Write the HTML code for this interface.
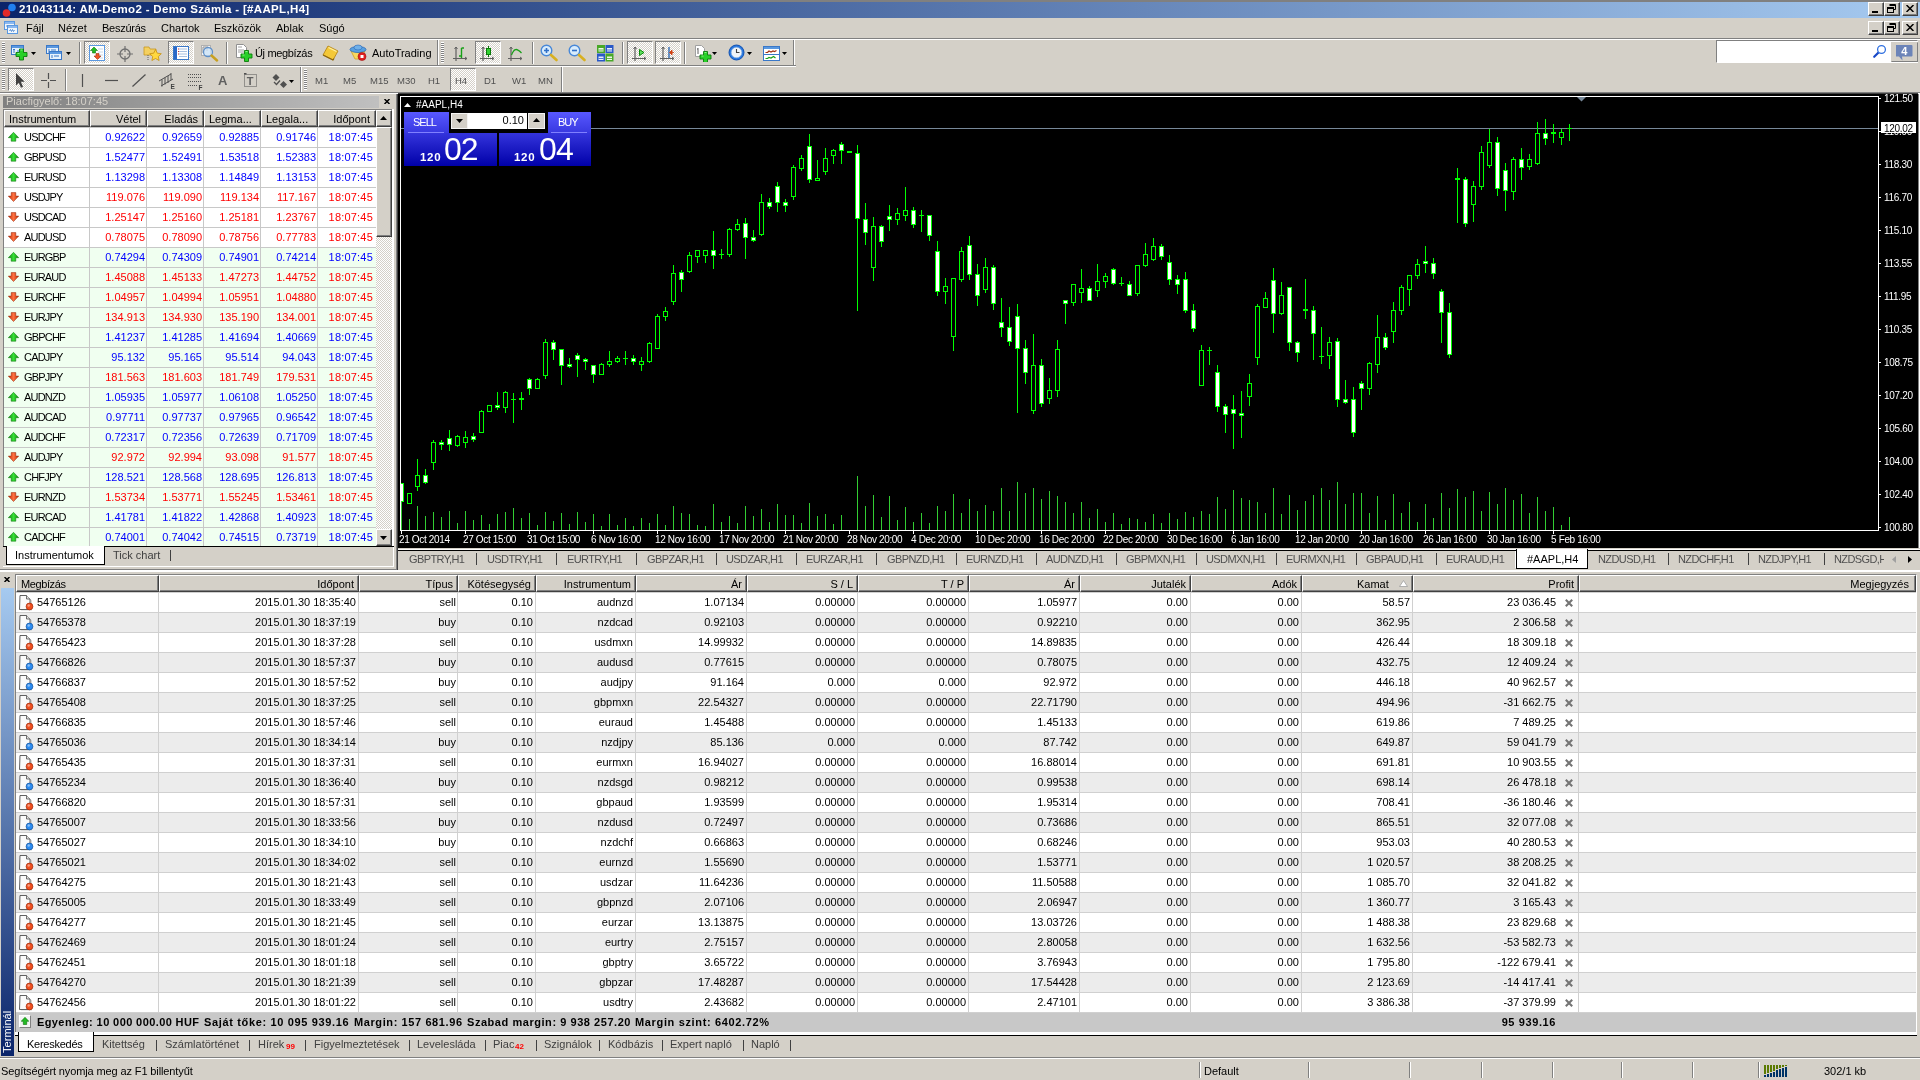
<!DOCTYPE html>
<html><head><meta charset="utf-8"><title>MT4</title><style>
html,body{margin:0;padding:0;}
body{width:1920px;height:1080px;overflow:hidden;background:#D4D0C8;position:relative;font-family:"Liberation Sans",sans-serif;font-size:11px;color:#000;}
div,span,svg{position:absolute;box-sizing:border-box;}
.t{white-space:nowrap;line-height:13px;height:13px;}
.b{font-weight:bold;}
.hd{background:#D4D0C8;border-top:1px solid #fff;border-left:1px solid #fff;border-right:1px solid #404040;border-bottom:1px solid #404040;}
.hd:after{content:"";position:absolute;right:0;bottom:0;left:0;top:0;border-right:1px solid #808080;border-bottom:1px solid #808080;}
.pr{border:1px solid;border-color:#808080 #fff #fff #808080;background-color:#fff;background-image:linear-gradient(45deg,#D4D0C8 25%,transparent 25%,transparent 75%,#D4D0C8 75%),linear-gradient(45deg,#D4D0C8 25%,transparent 25%,transparent 75%,#D4D0C8 75%);background-size:2px 2px;background-position:0 0,1px 1px;}
.sep{width:2px;border-left:1px solid #808080;border-right:1px solid #fff;}
.grip{width:3px;background:repeating-linear-gradient(#fff 0,#fff 1px,#808080 1px,#808080 2px);}
.btn{background:#D4D0C8;border:1px solid;border-color:#fff #404040 #404040 #fff;}
.btn:after{content:"";position:absolute;left:0;top:0;right:0;bottom:0;border-right:1px solid #808080;border-bottom:1px solid #808080;}
.g{color:#505050;}
.ax{font-size:10px;color:#fff;line-height:11px;height:11px;white-space:nowrap;}
</style></head><body>
<div id="root" style="left:0;top:0;width:1920px;height:1080px;will-change:transform">
<div style="left:0px;top:0px;width:1920px;height:2px;background:#808080"></div>
<div style="left:0px;top:2px;width:1920px;height:16px;background:linear-gradient(90deg,#0A246A 0%,#A6CAF0 100%)"></div>
<svg style="left:2px;top:3px;width:15px;height:15px" viewBox="0 0 15 15"><circle cx="4.500" cy="10" r="3.800" fill="#E02828"/><circle cx="10" cy="4.500" r="3.800" fill="#2080F0"/></svg>
<span class="t" style="left:19px;top:3px;color:#fff;font-weight:bold;font-size:11.5px;letter-spacing:0.33px">21043114: AM-Demo2 - Demo Számla - [#AAPL,H4]</span>
<div class="btn" style="left:1868px;top:2px;width:16px;height:14px;"></div>
<div style="left:1872px;top:11px;width:6px;height:2px;background:#000"></div>
<div class="btn" style="left:1884px;top:2px;width:16px;height:14px;"></div>
<svg style="left:1887px;top:4px;width:10px;height:10px" viewBox="0 0 10 10"><path d="M2.500 0.500h6v5h-1.500M2.500 1.500h6" stroke="#000" fill="none"/><rect x="0.500" y="3.500" width="6" height="5" fill="none" stroke="#000"/><path d="M0.500 4.500h6" stroke="#000"/></svg>
<div class="btn" style="left:1902px;top:2px;width:16px;height:14px;"></div>
<svg style="left:1906px;top:5px;width:8px;height:7px" viewBox="0 0 8 7"><path d="M0.500 0l7 7M7.500 0l-7 7" stroke="#000" stroke-width="1.500"/></svg>
<div class="btn" style="left:1868px;top:21px;width:16px;height:14px;"></div>
<div style="left:1872px;top:30px;width:6px;height:2px;background:#000"></div>
<div class="btn" style="left:1884px;top:21px;width:16px;height:14px;"></div>
<svg style="left:1887px;top:23px;width:10px;height:10px" viewBox="0 0 10 10"><path d="M2.500 0.500h6v5h-1.500M2.500 1.500h6" stroke="#000" fill="none"/><rect x="0.500" y="3.500" width="6" height="5" fill="none" stroke="#000"/><path d="M0.500 4.500h6" stroke="#000"/></svg>
<div class="btn" style="left:1902px;top:21px;width:16px;height:14px;"></div>
<svg style="left:1906px;top:24px;width:8px;height:7px" viewBox="0 0 8 7"><path d="M0.500 0l7 7M7.500 0l-7 7" stroke="#000" stroke-width="1.500"/></svg>
<svg style="left:4px;top:21px;width:15px;height:14px" viewBox="0 0 15 14"><rect x="0.500" y="0.500" width="10" height="8" fill="#F0F6FC" stroke="#5A98E0"/><rect x="1" y="1" width="9" height="2" fill="#8AB8F0"/><rect x="3.500" y="4.500" width="10" height="8" fill="#F0F6FC" stroke="#5A98E0"/><rect x="4" y="5" width="9" height="2" fill="#8AB8F0"/><path d="M5.500 10l1-1.500 1 2 1-2 1 2 1-1.500" stroke="#3A78C8" stroke-width=".8" fill="none"/><path d="M2 5h1.500" stroke="#3A78C8" stroke-width=".8"/></svg>
<span class="t" style="left:26px;top:22px;">Fájl</span>
<span class="t" style="left:58px;top:22px;">Nézet</span>
<span class="t" style="left:102px;top:22px;letter-spacing:-0.25px">Beszúrás</span>
<span class="t" style="left:161px;top:22px;">Chartok</span>
<span class="t" style="left:214px;top:22px;">Eszközök</span>
<span class="t" style="left:276px;top:22px;">Ablak</span>
<span class="t" style="left:319px;top:22px;">Súgó</span>
<div style="left:0px;top:38px;width:1920px;height:1px;background:#808080"></div>
<div style="left:0px;top:39px;width:1920px;height:1px;background:#fff"></div>
<div style="left:0px;top:65px;width:796px;height:1px;background:#808080"></div>
<div style="left:0px;top:66px;width:796px;height:1px;background:#fff"></div>
<div class="grip" style="left:2px;top:42px;width:3px;height:21px;"></div>
<svg style="left:11px;top:44px;width:18px;height:18px" viewBox="0 0 18 18"><rect x="0.5" y="1.5" width="12" height="9" fill="#E8F2FC" stroke="#3A78C8"/><rect x="1" y="2" width="11" height="2" fill="#5A98E0"/><path d="M3 5v4M2 6l1-1 1 1M6 7h4" stroke="#3A78C8" fill="none"/><path d="M8.5 5.0h4v3.500h3.500v4h-3.500v3.500h-4v-3.500h-3.500v-4h3.500z" fill="#28D028" stroke="#0C7C0C" stroke-width=".9"/><path d="M9.5 6.0h2M6.5 9.5h2" stroke="#A0FFA0" stroke-width="1" opacity=".8"/></svg>
<svg style="left:31px;top:52px;width:5px;height:3px" viewBox="0 0 5 3"><path d="M0 0h5l-2.500 3z" fill="#000"/></svg>
<svg style="left:46px;top:44px;width:18px;height:18px" viewBox="0 0 18 18"><rect x="0.5" y="1.5" width="12" height="8" fill="#E8F2FC" stroke="#3A78C8"/><rect x="1" y="2" width="11" height="2" fill="#5A98E0"/><path d="M3 5v4M5 6h5" stroke="#3A78C8"/><rect x="3.5" y="7.5" width="12" height="8" fill="#E8F2FC" stroke="#3A78C8"/><rect x="4" y="8" width="11" height="2" fill="#5A98E0"/><path d="M6 11v3M8 12h5" stroke="#3A78C8"/></svg>
<svg style="left:66px;top:52px;width:5px;height:3px" viewBox="0 0 5 3"><path d="M0 0h5l-2.500 3z" fill="#000"/></svg>
<div class="sep" style="left:79px;top:42px;width:2px;height:22px;"></div>
<div class="pr" style="left:84px;top:41px;width:26px;height:23px;"></div>
<svg style="left:89px;top:45px;width:16px;height:16px" viewBox="0 0 16 16"><rect x="0.5" y="0.5" width="15" height="15" fill="#fff" stroke="#5A98E0"/><path d="M9 4h5M9 7h5M9 10h5M9 13h5" stroke="#C8D8E8"/><path d="M5 2l3.5 3.5h-2v2.5h-3v-2.5h-2z" fill="#22BB22" stroke="#0A7A0A" stroke-width=".6"/><path d="M8.5 14.500l3.500-3.500h-2v-2.500h-3v2.500h-2z" fill="#EE5522" stroke="#A03010" stroke-width=".6"/></svg>
<svg style="left:117px;top:46px;width:16px;height:16px" viewBox="0 0 16 16"><circle cx="8" cy="8" r="5" fill="none" stroke="#707070" stroke-width="1.3"/><path d="M8 0v6M8 10v6M0 8h6M10 8h6" stroke="#707070" stroke-width="1.2"/></svg>
<svg style="left:143px;top:44px;width:19px;height:18px" viewBox="0 0 19 18"><path d="M1 3h5l1 2h6v6h-12z" fill="#F4D060" stroke="#C89820" stroke-width=".8"/><path d="M5 11v5" stroke="#606060" stroke-dasharray="1 1"/><path d="M12.500 5.500l1.800 3.700 4 .5-3 2.800.8 4-3.600-2-3.600 2 .8-4-3-2.800 4-.5z" fill="#FFD840" stroke="#C89010" stroke-width=".8"/></svg>
<div class="pr" style="left:168px;top:41px;width:26px;height:23px;"></div>
<svg style="left:173px;top:45px;width:16px;height:16px" viewBox="0 0 16 16"><rect x="0.5" y="1.500" width="15" height="13" fill="#fff" stroke="#3A78C8"/><rect x="1" y="2" width="3" height="12" fill="#2A68C8"/><path d="M6 4h8M6 6.500h8M6 9h8M6 11.500h8" stroke="#A8C0E0"/><path d="M5 4h1M5 6.500h1M5 9h1" stroke="#D03030"/></svg>
<svg style="left:200px;top:44px;width:19px;height:18px" viewBox="0 0 19 18"><rect x="1.500" y="1.500" width="9" height="10" fill="#F4F4F4" stroke="#B0B0B0"/><path d="M3 3v6M7 3v4M3 3h5" stroke="#909090"/><circle cx="8" cy="8" r="4.500" fill="#CCE4F8" fill-opacity=".8" stroke="#6090C8" stroke-width="1.300"/><path d="M11.500 11.500l5.500 5" stroke="#C8A020" stroke-width="2.400" stroke-linecap="round"/></svg>
<div class="sep" style="left:226px;top:42px;width:2px;height:22px;"></div>
<svg style="left:235px;top:44px;width:18px;height:18px" viewBox="0 0 18 18"><path d="M1.500 0.500h7l3 3v10h-10z" fill="#fff" stroke="#909090"/><path d="M3 3h4M3 6h6M3 8h6" stroke="#A0A0A0"/><path d="M9.5 6.5h4v3.500h3.500v4h-3.500v3.500h-4v-3.500h-3.500v-4h3.500z" fill="#28D028" stroke="#0C7C0C" stroke-width=".9"/><path d="M10.5 7.5h2M7.5 11h2" stroke="#A0FFA0" stroke-width="1" opacity=".8"/></svg>
<span class="t" style="left:255px;top:47px;letter-spacing:-0.35px">Új megbízás</span>
<svg style="left:322px;top:45px;width:18px;height:16px" viewBox="0 0 18 16"><path d="M6 1l10 5-5 9-10-5z" fill="#F4C838" stroke="#B88818" stroke-width=".9"/><path d="M1 10l10 5 1 -1.500" fill="none" stroke="#8A6410" stroke-width="1.200"/><path d="M6.500 2.500l8 4" stroke="#FFF0A0" stroke-width="1.200"/></svg>
<svg style="left:349px;top:44px;width:18px;height:18px" viewBox="0 0 18 18"><path d="M2 7l4 8h6l4-8z" fill="#F8D860" stroke="#D0A020" stroke-width=".8"/><ellipse cx="9" cy="5.500" rx="8" ry="3" fill="#58A0E0" stroke="#2868B8" stroke-width=".8"/><ellipse cx="9" cy="3.500" rx="4" ry="2.500" fill="#70B0E8" stroke="#2868B8" stroke-width=".6"/><circle cx="13" cy="12.500" r="4" fill="#E02020" stroke="#A01010" stroke-width=".6"/><rect x="11.500" y="11" width="3" height="3" fill="#fff"/></svg>
<span class="t" style="left:372px;top:47px;">AutoTrading</span>
<div style="left:437px;top:40px;width:1px;height:25px;background:#808080"></div>
<div style="left:438px;top:40px;width:1px;height:25px;background:#fff"></div>
<div class="grip" style="left:441px;top:42px;width:3px;height:21px;"></div>
<svg style="left:453px;top:46px;width:16px;height:16px" viewBox="0 0 16 16"><path d="M3 1v14M0 12.500h14" stroke="#606060" stroke-width="1.200" fill="none"/><path d="M1.500 3l1.500-2 1.500 2M12 11l2 1.500-2 1.500" stroke="#606060" fill="none"/><path d="M8.500 2v10M8.500 2h2.500M6 10h2.500" stroke="#18A018" stroke-width="1.400" fill="none"/></svg>
<div class="pr" style="left:475px;top:41px;width:26px;height:23px;"></div>
<svg style="left:480px;top:46px;width:16px;height:16px" viewBox="0 0 16 16"><path d="M3 1v14M0 12.500h14" stroke="#606060" stroke-width="1.200" fill="none"/><path d="M1.500 3l1.500-2 1.500 2M12 11l2 1.500-2 1.500" stroke="#606060" fill="none"/><path d="M8.500 0v11" stroke="#0A7A0A"/><rect x="6.500" y="2.500" width="4" height="6" fill="#30D030" stroke="#0A7A0A"/></svg>
<svg style="left:508px;top:46px;width:16px;height:16px" viewBox="0 0 16 16"><path d="M3 1v14M0 12.500h14" stroke="#606060" stroke-width="1.200" fill="none"/><path d="M1.500 3l1.500-2 1.500 2M12 11l2 1.500-2 1.500" stroke="#606060" fill="none"/><path d="M3.500 9c3-8 6-6 10-2" stroke="#18A018" stroke-width="1.300" fill="none"/></svg>
<div class="sep" style="left:532px;top:42px;width:2px;height:22px;"></div>
<svg style="left:540px;top:44px;width:18px;height:18px" viewBox="0 0 18 18"><circle cx="6.500" cy="6.500" r="5.300" fill="#D8ECFC" stroke="#4888D8" stroke-width="1.400"/><path d="M4 6.500h5M6.500 4v5" stroke="#3070C8" stroke-width="1.600"/><path d="M11 11l5.500 5" stroke="#D8B020" stroke-width="2.600" stroke-linecap="round"/></svg>
<svg style="left:568px;top:44px;width:18px;height:18px" viewBox="0 0 18 18"><circle cx="6.500" cy="6.500" r="5.300" fill="#D8ECFC" stroke="#4888D8" stroke-width="1.400"/><path d="M4 6.500h5" stroke="#3070C8" stroke-width="1.600"/><path d="M11 11l5.500 5" stroke="#D8B020" stroke-width="2.600" stroke-linecap="round"/></svg>
<svg style="left:597px;top:45px;width:17px;height:17px" viewBox="0 0 17 17"><rect x="0" y="0" width="8" height="8" fill="#48A828"/><rect x="1.5" y="3" width="5" height="3.500" fill="#fff" fill-opacity=".9"/><path d="M1.5 5h5" stroke="#48A828" stroke-width=".8"/><rect x="8.5" y="0" width="8" height="8" fill="#2858C8"/><rect x="10.0" y="3" width="5" height="3.500" fill="#fff" fill-opacity=".9"/><path d="M10.0 5h5" stroke="#2858C8" stroke-width=".8"/><rect x="0" y="8.5" width="8" height="8" fill="#2858C8"/><rect x="1.5" y="11.5" width="5" height="3.500" fill="#fff" fill-opacity=".9"/><path d="M1.5 13.5h5" stroke="#2858C8" stroke-width=".8"/><rect x="8.5" y="8.5" width="8" height="8" fill="#48A828"/><rect x="10.0" y="11.5" width="5" height="3.500" fill="#fff" fill-opacity=".9"/><path d="M10.0 13.5h5" stroke="#48A828" stroke-width=".8"/></svg>
<div class="sep" style="left:622px;top:42px;width:2px;height:22px;"></div>
<div class="pr" style="left:627px;top:41px;width:26px;height:23px;"></div>
<svg style="left:632px;top:46px;width:16px;height:16px" viewBox="0 0 16 16"><path d="M3 1v14M0 12.500h14" stroke="#606060" stroke-width="1.200" fill="none"/><path d="M1.500 3l1.500-2 1.500 2M12 11l2 1.500-2 1.500" stroke="#606060" fill="none"/><path d="M7.500 3.500l4.500 3-4.500 3z" fill="#60E060" stroke="#0A8A0A"/></svg>
<div class="pr" style="left:655px;top:41px;width:26px;height:23px;"></div>
<svg style="left:660px;top:46px;width:16px;height:16px" viewBox="0 0 16 16"><path d="M3 1v14M0 12.500h14" stroke="#606060" stroke-width="1.200" fill="none"/><path d="M1.500 3l1.500-2 1.500 2M12 11l2 1.500-2 1.500" stroke="#606060" fill="none"/><path d="M9 1v11" stroke="#2060B0" stroke-width="1.300"/><path d="M14 6.500h-4M12 4l-2.500 2.500 2.500 2.500z" stroke="#D04010" fill="#D04010" stroke-width=".8"/></svg>
<div class="sep" style="left:684px;top:42px;width:2px;height:22px;"></div>
<svg style="left:694px;top:44px;width:18px;height:18px" viewBox="0 0 18 18"><path d="M1.500 1.500h6l3 3v8h-9z" fill="#fff" stroke="#A0A0A0"/><path d="M4 4v6M3 5h1" stroke="#606060"/><path d="M9.5 7.5h4v3.500h3.500v4h-3.500v3.500h-4v-3.500h-3.500v-4h3.500z" fill="#28D028" stroke="#0C7C0C" stroke-width=".9"/><path d="M10.5 8.5h2M7.5 12h2" stroke="#A0FFA0" stroke-width="1" opacity=".8"/></svg>
<svg style="left:712px;top:52px;width:5px;height:3px" viewBox="0 0 5 3"><path d="M0 0h5l-2.500 3z" fill="#000"/></svg>
<svg style="left:728px;top:44px;width:17px;height:17px" viewBox="0 0 17 17"><circle cx="8.500" cy="8.500" r="7.500" fill="#2878E0" stroke="#1050B0"/><circle cx="8.500" cy="8.500" r="5.300" fill="#F0F4F8" stroke="#88B0E0" stroke-width=".6"/><path d="M8.500 5v3.500h3" stroke="#404040" fill="none" stroke-width="1.100"/></svg>
<svg style="left:747px;top:52px;width:5px;height:3px" viewBox="0 0 5 3"><path d="M0 0h5l-2.500 3z" fill="#000"/></svg>
<svg style="left:763px;top:46px;width:17px;height:15px" viewBox="0 0 17 15"><rect x="0.500" y="0.500" width="16" height="14" fill="#fff" stroke="#3A78C8"/><rect x="1" y="1" width="15" height="2" fill="#5A98E0"/><path d="M1 8.500h15" stroke="#3A78C8"/><path d="M2.500 6.500h2l1.500-1.500 2 1 2-1 1.500 0.500 2-1" stroke="#A03010" stroke-width="1.200" fill="none"/><path d="M2.500 12.500h2l1.500-1 2 0.500 2.500-1.500 2 1.500" stroke="#18A018" stroke-width="1.200" fill="none"/></svg>
<svg style="left:782px;top:52px;width:5px;height:3px" viewBox="0 0 5 3"><path d="M0 0h5l-2.500 3z" fill="#000"/></svg>
<div style="left:793px;top:40px;width:1px;height:25px;background:#808080"></div>
<div style="left:794px;top:40px;width:1px;height:25px;background:#fff"></div>
<div style="left:1716px;top:40px;width:202px;height:23px;background:#fff;border:1px solid;border-color:#808080 #fff #fff #808080"></div>
<svg style="left:1872px;top:44px;width:16px;height:16px" viewBox="0 0 16 16"><path d="M6.500 8.500l-4.300 4.300" stroke="#1848C8" stroke-width="2.200" stroke-linecap="round"/><circle cx="9.500" cy="5.500" r="3.900" fill="#fff" stroke="#3070E0" stroke-width="1.300"/></svg>
<div style="left:1891px;top:42px;width:27px;height:20px;background:#D4D0C8;border:1px solid;border-color:#D4D0C8 #808080 #808080 #D4D0C8"></div>
<svg style="left:1896px;top:45px;width:17px;height:16px" viewBox="0 0 17 16"><path d="M1 0h14.500a1 1 0 0 1 1 1v9.500a1 1 0 0 1-1 1h-9.500l0.500 4-3.500-4h-2.500a1 1 0 0 1-1-1v-9.500a1 1 0 0 1 1-1z" fill="#6C84B8"/><text x="8.300" y="9.800" text-anchor="middle" font-size="11" font-weight="bold" font-family="Liberation Sans,sans-serif" fill="#fff">4</text></svg>
<div style="left:0px;top:92px;width:1920px;height:1px;background:#808080"></div>
<div style="left:0px;top:93px;width:1920px;height:1px;background:#fff"></div>
<div style="left:398px;top:93px;width:1520px;height:1px;background:#404040"></div>
<div class="grip" style="left:2px;top:69px;width:3px;height:21px;"></div>
<div class="pr" style="left:8px;top:68px;width:26px;height:23px;"></div>
<svg style="left:15px;top:73px;width:10px;height:15px" viewBox="0 0 10 15"><path d="M1 0v12.500l2.800-2.800 2.200 5 2-1-2.200-4.900h3.800z" fill="#404040"/></svg>
<svg style="left:40px;top:72px;width:17px;height:17px" viewBox="0 0 17 17"><path d="M8.500 1v6M8.500 10v6M1 8.500h6M10 8.500h6" stroke="#505050" stroke-width="1.200"/></svg>
<div class="sep" style="left:65px;top:69px;width:2px;height:22px;"></div>
<svg style="left:81px;top:74px;width:3px;height:13px" viewBox="0 0 3 13"><path d="M1.500 0v13" stroke="#505050" stroke-width="1.200"/></svg>
<svg style="left:105px;top:79px;width:13px;height:3px" viewBox="0 0 13 3"><path d="M0 1.500h13" stroke="#505050" stroke-width="1.200"/></svg>
<svg style="left:132px;top:74px;width:14px;height:13px" viewBox="0 0 14 13"><path d="M0.500 12.500l13-12" stroke="#505050" stroke-width="1.200"/></svg>
<svg style="left:159px;top:72px;width:17px;height:17px" viewBox="0 0 17 17"><path d="M0 9l12-7M2 14l12-7M3 7.500v7M6 5.500v7M9 4v7M12 1v7" stroke="#505050" stroke-width="1"/><text x="11.500" y="16.500" font-size="6.500" font-weight="bold" font-family="Liberation Sans,sans-serif" fill="#404040">E</text></svg>
<svg style="left:188px;top:73px;width:16px;height:17px" viewBox="0 0 16 17"><path d="M0 1.500h13M0 4.500h13M0 8.500h13M0 12.500h9" stroke="#505050" stroke-width="1" stroke-dasharray="1 1"/><text x="10.500" y="16.500" font-size="6.500" font-weight="bold" font-family="Liberation Sans,sans-serif" fill="#404040">F</text></svg>
<span class="t" style="left:218px;top:73px;font-size:13px;font-weight:bold;color:#606060;line-height:15px;height:15px">A</span>
<svg style="left:244px;top:73px;width:14px;height:14px" viewBox="0 0 14 14"><rect x="0.500" y="1.500" width="12" height="12" fill="none" stroke="#505050" stroke-dasharray="1 1"/><rect x="0" y="0" width="2.500" height="1.500" fill="#505050"/><text x="2.800" y="11.800" font-size="11" font-weight="bold" font-family="Liberation Sans,sans-serif" fill="#606060">T</text></svg>
<svg style="left:272px;top:74px;width:16px;height:14px" viewBox="0 0 16 14"><path d="M4 0l3.500 3.500-3.500 3.500-3.500-3.500z" fill="#505050"/><path d="M11.500 7l3.500 3.500-3.500 3.500-3.500-3.500z" fill="#505050"/><path d="M2 8l2.500 2.500 3.500-4" stroke="#505050" stroke-width="1.300" fill="none"/></svg>
<svg style="left:289px;top:80px;width:5px;height:3px" viewBox="0 0 5 3"><path d="M0 0h5l-2.500 3z" fill="#000"/></svg>
<div style="left:300px;top:67px;width:1px;height:25px;background:#808080"></div>
<div style="left:301px;top:67px;width:1px;height:25px;background:#fff"></div>
<div class="grip" style="left:304px;top:69px;width:3px;height:21px;"></div>
<span class="t" style="left:315px;top:74px;color:#505050;font-size:9.5px">M1</span>
<span class="t" style="left:343px;top:74px;color:#505050;font-size:9.5px">M5</span>
<span class="t" style="left:370px;top:74px;color:#505050;font-size:9.5px">M15</span>
<span class="t" style="left:397px;top:74px;color:#505050;font-size:9.5px">M30</span>
<span class="t" style="left:428px;top:74px;color:#505050;font-size:9.5px">H1</span>
<div class="pr" style="left:450px;top:68px;width:26px;height:23px;"></div>
<span class="t" style="left:455px;top:74px;color:#505050;font-size:9.5px">H4</span>
<span class="t" style="left:484px;top:74px;color:#505050;font-size:9.5px">D1</span>
<span class="t" style="left:512px;top:74px;color:#505050;font-size:9.5px">W1</span>
<span class="t" style="left:538px;top:74px;color:#505050;font-size:9.5px">MN</span>
<div style="left:561px;top:67px;width:1px;height:25px;background:#808080"></div>
<div style="left:562px;top:67px;width:1px;height:25px;background:#fff"></div>
<div style="left:0px;top:94px;width:397px;height:476px;background:#D4D0C8"></div>
<div style="left:396px;top:94px;width:1px;height:476px;background:#808080"></div>
<div style="left:397px;top:94px;width:1px;height:476px;background:#404040"></div>
<div style="left:0px;top:569px;width:397px;height:1px;background:#808080"></div>
<div style="left:393px;top:547px;width:1px;height:20px;background:#fff"></div>
<div style="left:3px;top:566px;width:391px;height:1px;background:#fff"></div>
<div style="left:0px;top:570px;width:1920px;height:1px;background:#fff"></div>
<div style="left:3px;top:96px;width:376px;height:12px;background:linear-gradient(90deg,#808080 0%,#C0C0C0 100%)"></div>
<span class="t" style="left:6px;top:95px;color:#D4D0C8">Piacfigyelő: 18:07:45</span>
<svg style="left:384px;top:99px;width:6px;height:5px" viewBox="0 0 6 5"><path d="M0.500 0l5 5M5.500 0l-5 5" stroke="#000" stroke-width="1.500"/></svg>
<div style="left:3px;top:109px;width:391px;height:437px;border:1px solid;border-color:#808080 #fff #fff #808080;border-bottom:0;background:#fff"></div>
<div class="hd" style="left:4px;top:110px;width:86px;height:17px;"></div>
<span class="t" style="left:9px;top:113px;">Instrumentum</span>
<div class="hd" style="left:90px;top:110px;width:57px;height:17px;"></div>
<span class="t" style="right:1779px;top:113px;">Vétel</span>
<div class="hd" style="left:147px;top:110px;width:57px;height:17px;"></div>
<span class="t" style="right:1722px;top:113px;">Eladás</span>
<div class="hd" style="left:204px;top:110px;width:57px;height:17px;"></div>
<span class="t" style="left:209px;top:113px;">Legma...</span>
<div class="hd" style="left:261px;top:110px;width:57px;height:17px;"></div>
<span class="t" style="left:266px;top:113px;">Legala...</span>
<div class="hd" style="left:318px;top:110px;width:58px;height:17px;"></div>
<span class="t" style="right:1550px;top:113px;">Időpont</span>
<div style="left:4px;top:128px;width:372px;height:20px;background:#fff;border-bottom:1px solid #C8C8C8"></div>
<svg style="left:8px;top:132px;width:11px;height:10px" viewBox="0 0 11 10"><defs><linearGradient id="gu" x1="0" x2="1"><stop offset="0" stop-color="#0A8A0A"/><stop offset=".5" stop-color="#38E038"/><stop offset="1" stop-color="#0A8A0A"/></linearGradient></defs><path d="M5.500 0.300l5.200 5.400h-2.900v3.500h-4.600v-3.500h-2.900z" fill="url(#gu)" stroke="#087008" stroke-width=".5"/></svg>
<span class="t" style="left:24px;top:131px;letter-spacing:-0.8px">USDCHF</span>
<span class="t" style="right:1775px;top:131px;color:#0000FF">0.92622</span>
<span class="t" style="right:1718px;top:131px;color:#0000FF">0.92659</span>
<span class="t" style="right:1661px;top:131px;color:#0000FF">0.92885</span>
<span class="t" style="right:1604px;top:131px;color:#0000FF">0.91746</span>
<span class="t" style="right:1547px;top:131px;color:#0000FF;letter-spacing:0.2px">18:07:45</span>
<div style="left:4px;top:148px;width:372px;height:20px;background:#fff;border-bottom:1px solid #C8C8C8"></div>
<svg style="left:8px;top:152px;width:11px;height:10px" viewBox="0 0 11 10"><defs><linearGradient id="gu" x1="0" x2="1"><stop offset="0" stop-color="#0A8A0A"/><stop offset=".5" stop-color="#38E038"/><stop offset="1" stop-color="#0A8A0A"/></linearGradient></defs><path d="M5.500 0.300l5.200 5.400h-2.900v3.500h-4.600v-3.500h-2.900z" fill="url(#gu)" stroke="#087008" stroke-width=".5"/></svg>
<span class="t" style="left:24px;top:151px;letter-spacing:-0.8px">GBPUSD</span>
<span class="t" style="right:1775px;top:151px;color:#0000FF">1.52477</span>
<span class="t" style="right:1718px;top:151px;color:#0000FF">1.52491</span>
<span class="t" style="right:1661px;top:151px;color:#0000FF">1.53518</span>
<span class="t" style="right:1604px;top:151px;color:#0000FF">1.52383</span>
<span class="t" style="right:1547px;top:151px;color:#0000FF;letter-spacing:0.2px">18:07:45</span>
<div style="left:4px;top:168px;width:372px;height:20px;background:#fff;border-bottom:1px solid #C8C8C8"></div>
<svg style="left:8px;top:172px;width:11px;height:10px" viewBox="0 0 11 10"><defs><linearGradient id="gu" x1="0" x2="1"><stop offset="0" stop-color="#0A8A0A"/><stop offset=".5" stop-color="#38E038"/><stop offset="1" stop-color="#0A8A0A"/></linearGradient></defs><path d="M5.500 0.300l5.200 5.400h-2.900v3.500h-4.600v-3.500h-2.900z" fill="url(#gu)" stroke="#087008" stroke-width=".5"/></svg>
<span class="t" style="left:24px;top:171px;letter-spacing:-0.8px">EURUSD</span>
<span class="t" style="right:1775px;top:171px;color:#0000FF">1.13298</span>
<span class="t" style="right:1718px;top:171px;color:#0000FF">1.13308</span>
<span class="t" style="right:1661px;top:171px;color:#0000FF">1.14849</span>
<span class="t" style="right:1604px;top:171px;color:#0000FF">1.13153</span>
<span class="t" style="right:1547px;top:171px;color:#0000FF;letter-spacing:0.2px">18:07:45</span>
<div style="left:4px;top:188px;width:372px;height:20px;background:#fff;border-bottom:1px solid #C8C8C8"></div>
<svg style="left:8px;top:192px;width:11px;height:10px" viewBox="0 0 11 10"><defs><linearGradient id="gd" x1="0" x2="1"><stop offset="0" stop-color="#C03008"/><stop offset=".5" stop-color="#FF7040"/><stop offset="1" stop-color="#C03008"/></linearGradient></defs><path d="M5.500 9.500l5.200-5.400h-2.900v-3.500h-4.600v3.500h-2.900z" fill="url(#gd)" stroke="#902000" stroke-width=".5"/></svg>
<span class="t" style="left:24px;top:191px;letter-spacing:-0.8px">USDJPY</span>
<span class="t" style="right:1775px;top:191px;color:#FF0000">119.076</span>
<span class="t" style="right:1718px;top:191px;color:#FF0000">119.090</span>
<span class="t" style="right:1661px;top:191px;color:#FF0000">119.134</span>
<span class="t" style="right:1604px;top:191px;color:#FF0000">117.167</span>
<span class="t" style="right:1547px;top:191px;color:#FF0000;letter-spacing:0.2px">18:07:45</span>
<div style="left:4px;top:208px;width:372px;height:20px;background:#fff;border-bottom:1px solid #C8C8C8"></div>
<svg style="left:8px;top:212px;width:11px;height:10px" viewBox="0 0 11 10"><defs><linearGradient id="gd" x1="0" x2="1"><stop offset="0" stop-color="#C03008"/><stop offset=".5" stop-color="#FF7040"/><stop offset="1" stop-color="#C03008"/></linearGradient></defs><path d="M5.500 9.500l5.200-5.400h-2.900v-3.500h-4.600v3.500h-2.900z" fill="url(#gd)" stroke="#902000" stroke-width=".5"/></svg>
<span class="t" style="left:24px;top:211px;letter-spacing:-0.8px">USDCAD</span>
<span class="t" style="right:1775px;top:211px;color:#FF0000">1.25147</span>
<span class="t" style="right:1718px;top:211px;color:#FF0000">1.25160</span>
<span class="t" style="right:1661px;top:211px;color:#FF0000">1.25181</span>
<span class="t" style="right:1604px;top:211px;color:#FF0000">1.23767</span>
<span class="t" style="right:1547px;top:211px;color:#FF0000;letter-spacing:0.2px">18:07:45</span>
<div style="left:4px;top:228px;width:372px;height:20px;background:#fff;border-bottom:1px solid #C8C8C8"></div>
<svg style="left:8px;top:232px;width:11px;height:10px" viewBox="0 0 11 10"><defs><linearGradient id="gd" x1="0" x2="1"><stop offset="0" stop-color="#C03008"/><stop offset=".5" stop-color="#FF7040"/><stop offset="1" stop-color="#C03008"/></linearGradient></defs><path d="M5.500 9.500l5.200-5.400h-2.900v-3.500h-4.600v3.500h-2.900z" fill="url(#gd)" stroke="#902000" stroke-width=".5"/></svg>
<span class="t" style="left:24px;top:231px;letter-spacing:-0.8px">AUDUSD</span>
<span class="t" style="right:1775px;top:231px;color:#FF0000">0.78075</span>
<span class="t" style="right:1718px;top:231px;color:#FF0000">0.78090</span>
<span class="t" style="right:1661px;top:231px;color:#FF0000">0.78756</span>
<span class="t" style="right:1604px;top:231px;color:#FF0000">0.77783</span>
<span class="t" style="right:1547px;top:231px;color:#FF0000;letter-spacing:0.2px">18:07:45</span>
<div style="left:4px;top:248px;width:372px;height:20px;background:#F0FFF0;border-bottom:1px solid #C8C8C8"></div>
<svg style="left:8px;top:252px;width:11px;height:10px" viewBox="0 0 11 10"><defs><linearGradient id="gu" x1="0" x2="1"><stop offset="0" stop-color="#0A8A0A"/><stop offset=".5" stop-color="#38E038"/><stop offset="1" stop-color="#0A8A0A"/></linearGradient></defs><path d="M5.500 0.300l5.200 5.400h-2.900v3.500h-4.600v-3.500h-2.900z" fill="url(#gu)" stroke="#087008" stroke-width=".5"/></svg>
<span class="t" style="left:24px;top:251px;letter-spacing:-0.8px">EURGBP</span>
<span class="t" style="right:1775px;top:251px;color:#0000FF">0.74294</span>
<span class="t" style="right:1718px;top:251px;color:#0000FF">0.74309</span>
<span class="t" style="right:1661px;top:251px;color:#0000FF">0.74901</span>
<span class="t" style="right:1604px;top:251px;color:#0000FF">0.74214</span>
<span class="t" style="right:1547px;top:251px;color:#0000FF;letter-spacing:0.2px">18:07:45</span>
<div style="left:4px;top:268px;width:372px;height:20px;background:#F0FFF0;border-bottom:1px solid #C8C8C8"></div>
<svg style="left:8px;top:272px;width:11px;height:10px" viewBox="0 0 11 10"><defs><linearGradient id="gd" x1="0" x2="1"><stop offset="0" stop-color="#C03008"/><stop offset=".5" stop-color="#FF7040"/><stop offset="1" stop-color="#C03008"/></linearGradient></defs><path d="M5.500 9.500l5.200-5.400h-2.900v-3.500h-4.600v3.500h-2.900z" fill="url(#gd)" stroke="#902000" stroke-width=".5"/></svg>
<span class="t" style="left:24px;top:271px;letter-spacing:-0.8px">EURAUD</span>
<span class="t" style="right:1775px;top:271px;color:#FF0000">1.45088</span>
<span class="t" style="right:1718px;top:271px;color:#FF0000">1.45133</span>
<span class="t" style="right:1661px;top:271px;color:#FF0000">1.47273</span>
<span class="t" style="right:1604px;top:271px;color:#FF0000">1.44752</span>
<span class="t" style="right:1547px;top:271px;color:#FF0000;letter-spacing:0.2px">18:07:45</span>
<div style="left:4px;top:288px;width:372px;height:20px;background:#F0FFF0;border-bottom:1px solid #C8C8C8"></div>
<svg style="left:8px;top:292px;width:11px;height:10px" viewBox="0 0 11 10"><defs><linearGradient id="gd" x1="0" x2="1"><stop offset="0" stop-color="#C03008"/><stop offset=".5" stop-color="#FF7040"/><stop offset="1" stop-color="#C03008"/></linearGradient></defs><path d="M5.500 9.500l5.200-5.400h-2.900v-3.500h-4.600v3.500h-2.900z" fill="url(#gd)" stroke="#902000" stroke-width=".5"/></svg>
<span class="t" style="left:24px;top:291px;letter-spacing:-0.8px">EURCHF</span>
<span class="t" style="right:1775px;top:291px;color:#FF0000">1.04957</span>
<span class="t" style="right:1718px;top:291px;color:#FF0000">1.04994</span>
<span class="t" style="right:1661px;top:291px;color:#FF0000">1.05951</span>
<span class="t" style="right:1604px;top:291px;color:#FF0000">1.04880</span>
<span class="t" style="right:1547px;top:291px;color:#FF0000;letter-spacing:0.2px">18:07:45</span>
<div style="left:4px;top:308px;width:372px;height:20px;background:#F0FFF0;border-bottom:1px solid #C8C8C8"></div>
<svg style="left:8px;top:312px;width:11px;height:10px" viewBox="0 0 11 10"><defs><linearGradient id="gd" x1="0" x2="1"><stop offset="0" stop-color="#C03008"/><stop offset=".5" stop-color="#FF7040"/><stop offset="1" stop-color="#C03008"/></linearGradient></defs><path d="M5.500 9.500l5.200-5.400h-2.900v-3.500h-4.600v3.500h-2.900z" fill="url(#gd)" stroke="#902000" stroke-width=".5"/></svg>
<span class="t" style="left:24px;top:311px;letter-spacing:-0.8px">EURJPY</span>
<span class="t" style="right:1775px;top:311px;color:#FF0000">134.913</span>
<span class="t" style="right:1718px;top:311px;color:#FF0000">134.930</span>
<span class="t" style="right:1661px;top:311px;color:#FF0000">135.190</span>
<span class="t" style="right:1604px;top:311px;color:#FF0000">134.001</span>
<span class="t" style="right:1547px;top:311px;color:#FF0000;letter-spacing:0.2px">18:07:45</span>
<div style="left:4px;top:328px;width:372px;height:20px;background:#F0FFF0;border-bottom:1px solid #C8C8C8"></div>
<svg style="left:8px;top:332px;width:11px;height:10px" viewBox="0 0 11 10"><defs><linearGradient id="gu" x1="0" x2="1"><stop offset="0" stop-color="#0A8A0A"/><stop offset=".5" stop-color="#38E038"/><stop offset="1" stop-color="#0A8A0A"/></linearGradient></defs><path d="M5.500 0.300l5.200 5.400h-2.900v3.500h-4.600v-3.500h-2.900z" fill="url(#gu)" stroke="#087008" stroke-width=".5"/></svg>
<span class="t" style="left:24px;top:331px;letter-spacing:-0.8px">GBPCHF</span>
<span class="t" style="right:1775px;top:331px;color:#0000FF">1.41237</span>
<span class="t" style="right:1718px;top:331px;color:#0000FF">1.41285</span>
<span class="t" style="right:1661px;top:331px;color:#0000FF">1.41694</span>
<span class="t" style="right:1604px;top:331px;color:#0000FF">1.40669</span>
<span class="t" style="right:1547px;top:331px;color:#0000FF;letter-spacing:0.2px">18:07:45</span>
<div style="left:4px;top:348px;width:372px;height:20px;background:#F0FFF0;border-bottom:1px solid #C8C8C8"></div>
<svg style="left:8px;top:352px;width:11px;height:10px" viewBox="0 0 11 10"><defs><linearGradient id="gu" x1="0" x2="1"><stop offset="0" stop-color="#0A8A0A"/><stop offset=".5" stop-color="#38E038"/><stop offset="1" stop-color="#0A8A0A"/></linearGradient></defs><path d="M5.500 0.300l5.200 5.400h-2.900v3.500h-4.600v-3.500h-2.900z" fill="url(#gu)" stroke="#087008" stroke-width=".5"/></svg>
<span class="t" style="left:24px;top:351px;letter-spacing:-0.8px">CADJPY</span>
<span class="t" style="right:1775px;top:351px;color:#0000FF">95.132</span>
<span class="t" style="right:1718px;top:351px;color:#0000FF">95.165</span>
<span class="t" style="right:1661px;top:351px;color:#0000FF">95.514</span>
<span class="t" style="right:1604px;top:351px;color:#0000FF">94.043</span>
<span class="t" style="right:1547px;top:351px;color:#0000FF;letter-spacing:0.2px">18:07:45</span>
<div style="left:4px;top:368px;width:372px;height:20px;background:#F0FFF0;border-bottom:1px solid #C8C8C8"></div>
<svg style="left:8px;top:372px;width:11px;height:10px" viewBox="0 0 11 10"><defs><linearGradient id="gd" x1="0" x2="1"><stop offset="0" stop-color="#C03008"/><stop offset=".5" stop-color="#FF7040"/><stop offset="1" stop-color="#C03008"/></linearGradient></defs><path d="M5.500 9.500l5.200-5.400h-2.900v-3.500h-4.600v3.500h-2.900z" fill="url(#gd)" stroke="#902000" stroke-width=".5"/></svg>
<span class="t" style="left:24px;top:371px;letter-spacing:-0.8px">GBPJPY</span>
<span class="t" style="right:1775px;top:371px;color:#FF0000">181.563</span>
<span class="t" style="right:1718px;top:371px;color:#FF0000">181.603</span>
<span class="t" style="right:1661px;top:371px;color:#FF0000">181.749</span>
<span class="t" style="right:1604px;top:371px;color:#FF0000">179.531</span>
<span class="t" style="right:1547px;top:371px;color:#FF0000;letter-spacing:0.2px">18:07:45</span>
<div style="left:4px;top:388px;width:372px;height:20px;background:#F0FFF0;border-bottom:1px solid #C8C8C8"></div>
<svg style="left:8px;top:392px;width:11px;height:10px" viewBox="0 0 11 10"><defs><linearGradient id="gu" x1="0" x2="1"><stop offset="0" stop-color="#0A8A0A"/><stop offset=".5" stop-color="#38E038"/><stop offset="1" stop-color="#0A8A0A"/></linearGradient></defs><path d="M5.500 0.300l5.200 5.400h-2.900v3.500h-4.600v-3.500h-2.900z" fill="url(#gu)" stroke="#087008" stroke-width=".5"/></svg>
<span class="t" style="left:24px;top:391px;letter-spacing:-0.8px">AUDNZD</span>
<span class="t" style="right:1775px;top:391px;color:#0000FF">1.05935</span>
<span class="t" style="right:1718px;top:391px;color:#0000FF">1.05977</span>
<span class="t" style="right:1661px;top:391px;color:#0000FF">1.06108</span>
<span class="t" style="right:1604px;top:391px;color:#0000FF">1.05250</span>
<span class="t" style="right:1547px;top:391px;color:#0000FF;letter-spacing:0.2px">18:07:45</span>
<div style="left:4px;top:408px;width:372px;height:20px;background:#F0FFF0;border-bottom:1px solid #C8C8C8"></div>
<svg style="left:8px;top:412px;width:11px;height:10px" viewBox="0 0 11 10"><defs><linearGradient id="gu" x1="0" x2="1"><stop offset="0" stop-color="#0A8A0A"/><stop offset=".5" stop-color="#38E038"/><stop offset="1" stop-color="#0A8A0A"/></linearGradient></defs><path d="M5.500 0.300l5.200 5.400h-2.900v3.500h-4.600v-3.500h-2.900z" fill="url(#gu)" stroke="#087008" stroke-width=".5"/></svg>
<span class="t" style="left:24px;top:411px;letter-spacing:-0.8px">AUDCAD</span>
<span class="t" style="right:1775px;top:411px;color:#0000FF">0.97711</span>
<span class="t" style="right:1718px;top:411px;color:#0000FF">0.97737</span>
<span class="t" style="right:1661px;top:411px;color:#0000FF">0.97965</span>
<span class="t" style="right:1604px;top:411px;color:#0000FF">0.96542</span>
<span class="t" style="right:1547px;top:411px;color:#0000FF;letter-spacing:0.2px">18:07:45</span>
<div style="left:4px;top:428px;width:372px;height:20px;background:#F0FFF0;border-bottom:1px solid #C8C8C8"></div>
<svg style="left:8px;top:432px;width:11px;height:10px" viewBox="0 0 11 10"><defs><linearGradient id="gu" x1="0" x2="1"><stop offset="0" stop-color="#0A8A0A"/><stop offset=".5" stop-color="#38E038"/><stop offset="1" stop-color="#0A8A0A"/></linearGradient></defs><path d="M5.500 0.300l5.200 5.400h-2.900v3.500h-4.600v-3.500h-2.900z" fill="url(#gu)" stroke="#087008" stroke-width=".5"/></svg>
<span class="t" style="left:24px;top:431px;letter-spacing:-0.8px">AUDCHF</span>
<span class="t" style="right:1775px;top:431px;color:#0000FF">0.72317</span>
<span class="t" style="right:1718px;top:431px;color:#0000FF">0.72356</span>
<span class="t" style="right:1661px;top:431px;color:#0000FF">0.72639</span>
<span class="t" style="right:1604px;top:431px;color:#0000FF">0.71709</span>
<span class="t" style="right:1547px;top:431px;color:#0000FF;letter-spacing:0.2px">18:07:45</span>
<div style="left:4px;top:448px;width:372px;height:20px;background:#F0FFF0;border-bottom:1px solid #C8C8C8"></div>
<svg style="left:8px;top:452px;width:11px;height:10px" viewBox="0 0 11 10"><defs><linearGradient id="gd" x1="0" x2="1"><stop offset="0" stop-color="#C03008"/><stop offset=".5" stop-color="#FF7040"/><stop offset="1" stop-color="#C03008"/></linearGradient></defs><path d="M5.500 9.500l5.200-5.400h-2.900v-3.500h-4.600v3.500h-2.900z" fill="url(#gd)" stroke="#902000" stroke-width=".5"/></svg>
<span class="t" style="left:24px;top:451px;letter-spacing:-0.8px">AUDJPY</span>
<span class="t" style="right:1775px;top:451px;color:#FF0000">92.972</span>
<span class="t" style="right:1718px;top:451px;color:#FF0000">92.994</span>
<span class="t" style="right:1661px;top:451px;color:#FF0000">93.098</span>
<span class="t" style="right:1604px;top:451px;color:#FF0000">91.577</span>
<span class="t" style="right:1547px;top:451px;color:#FF0000;letter-spacing:0.2px">18:07:45</span>
<div style="left:4px;top:468px;width:372px;height:20px;background:#F0FFF0;border-bottom:1px solid #C8C8C8"></div>
<svg style="left:8px;top:472px;width:11px;height:10px" viewBox="0 0 11 10"><defs><linearGradient id="gu" x1="0" x2="1"><stop offset="0" stop-color="#0A8A0A"/><stop offset=".5" stop-color="#38E038"/><stop offset="1" stop-color="#0A8A0A"/></linearGradient></defs><path d="M5.500 0.300l5.200 5.400h-2.900v3.500h-4.600v-3.500h-2.900z" fill="url(#gu)" stroke="#087008" stroke-width=".5"/></svg>
<span class="t" style="left:24px;top:471px;letter-spacing:-0.8px">CHFJPY</span>
<span class="t" style="right:1775px;top:471px;color:#0000FF">128.521</span>
<span class="t" style="right:1718px;top:471px;color:#0000FF">128.568</span>
<span class="t" style="right:1661px;top:471px;color:#0000FF">128.695</span>
<span class="t" style="right:1604px;top:471px;color:#0000FF">126.813</span>
<span class="t" style="right:1547px;top:471px;color:#0000FF;letter-spacing:0.2px">18:07:45</span>
<div style="left:4px;top:488px;width:372px;height:20px;background:#F0FFF0;border-bottom:1px solid #C8C8C8"></div>
<svg style="left:8px;top:492px;width:11px;height:10px" viewBox="0 0 11 10"><defs><linearGradient id="gd" x1="0" x2="1"><stop offset="0" stop-color="#C03008"/><stop offset=".5" stop-color="#FF7040"/><stop offset="1" stop-color="#C03008"/></linearGradient></defs><path d="M5.500 9.500l5.200-5.400h-2.900v-3.500h-4.600v3.500h-2.900z" fill="url(#gd)" stroke="#902000" stroke-width=".5"/></svg>
<span class="t" style="left:24px;top:491px;letter-spacing:-0.8px">EURNZD</span>
<span class="t" style="right:1775px;top:491px;color:#FF0000">1.53734</span>
<span class="t" style="right:1718px;top:491px;color:#FF0000">1.53771</span>
<span class="t" style="right:1661px;top:491px;color:#FF0000">1.55245</span>
<span class="t" style="right:1604px;top:491px;color:#FF0000">1.53461</span>
<span class="t" style="right:1547px;top:491px;color:#FF0000;letter-spacing:0.2px">18:07:45</span>
<div style="left:4px;top:508px;width:372px;height:20px;background:#F0FFF0;border-bottom:1px solid #C8C8C8"></div>
<svg style="left:8px;top:512px;width:11px;height:10px" viewBox="0 0 11 10"><defs><linearGradient id="gu" x1="0" x2="1"><stop offset="0" stop-color="#0A8A0A"/><stop offset=".5" stop-color="#38E038"/><stop offset="1" stop-color="#0A8A0A"/></linearGradient></defs><path d="M5.500 0.300l5.200 5.400h-2.900v3.500h-4.600v-3.500h-2.900z" fill="url(#gu)" stroke="#087008" stroke-width=".5"/></svg>
<span class="t" style="left:24px;top:511px;letter-spacing:-0.8px">EURCAD</span>
<span class="t" style="right:1775px;top:511px;color:#0000FF">1.41781</span>
<span class="t" style="right:1718px;top:511px;color:#0000FF">1.41822</span>
<span class="t" style="right:1661px;top:511px;color:#0000FF">1.42868</span>
<span class="t" style="right:1604px;top:511px;color:#0000FF">1.40923</span>
<span class="t" style="right:1547px;top:511px;color:#0000FF;letter-spacing:0.2px">18:07:45</span>
<div style="left:4px;top:528px;width:372px;height:18px;background:#F0FFF0"></div>
<svg style="left:8px;top:532px;width:11px;height:10px" viewBox="0 0 11 10"><defs><linearGradient id="gu" x1="0" x2="1"><stop offset="0" stop-color="#0A8A0A"/><stop offset=".5" stop-color="#38E038"/><stop offset="1" stop-color="#0A8A0A"/></linearGradient></defs><path d="M5.500 0.300l5.200 5.400h-2.900v3.500h-4.600v-3.500h-2.900z" fill="url(#gu)" stroke="#087008" stroke-width=".5"/></svg>
<span class="t" style="left:24px;top:531px;letter-spacing:-0.8px">CADCHF</span>
<span class="t" style="right:1775px;top:531px;color:#0000FF">0.74001</span>
<span class="t" style="right:1718px;top:531px;color:#0000FF">0.74042</span>
<span class="t" style="right:1661px;top:531px;color:#0000FF">0.74515</span>
<span class="t" style="right:1604px;top:531px;color:#0000FF">0.73719</span>
<span class="t" style="right:1547px;top:531px;color:#0000FF;letter-spacing:0.2px">18:07:45</span>
<div style="left:4px;top:127px;width:372px;height:1px;background:#C8C8C8"></div>
<div style="left:89px;top:127px;width:1px;height:419px;background:#C8C8C8"></div>
<div style="left:146px;top:127px;width:1px;height:419px;background:#C8C8C8"></div>
<div style="left:203px;top:127px;width:1px;height:419px;background:#C8C8C8"></div>
<div style="left:260px;top:127px;width:1px;height:419px;background:#C8C8C8"></div>
<div style="left:317px;top:127px;width:1px;height:419px;background:#C8C8C8"></div>
<div class="pr" style="left:376px;top:127px;width:16px;height:419px;border:0"></div>
<div class="btn" style="left:376px;top:110px;width:16px;height:17px;"></div>
<svg style="left:380px;top:116px;width:7px;height:4px" viewBox="0 0 7 4"><path d="M0 4h7l-3.500-4z" fill="#000"/></svg>
<div class="btn" style="left:376px;top:127px;width:16px;height:110px;"></div>
<div class="btn" style="left:376px;top:529px;width:16px;height:17px;"></div>
<svg style="left:380px;top:536px;width:7px;height:4px" viewBox="0 0 7 4"><path d="M0 0h7l-3.500 4z" fill="#000"/></svg>
<div style="left:392px;top:109px;width:2px;height:438px;background:#fff"></div>
<div style="left:3px;top:546px;width:391px;height:1px;background:#000"></div>
<div style="left:6px;top:546px;width:99px;height:19px;background:#fff;border:1px solid #000;border-top:0;border-color:#000"></div>
<span class="t" style="left:15px;top:549px;">Instrumentumok</span>
<span class="t" style="left:113px;top:549px;color:#404040">Tick chart</span>
<div style="left:170px;top:550px;width:1px;height:11px;background:#404040"></div>
<svg style="left:398px;top:94px;width:1520px;height:454px" viewBox="0 0 1520 454" shape-rendering="crispEdges"><rect x="0" y="0" width="1520" height="454" fill="#000"/><rect x="3" y="34" width="1477" height="1" fill="#778899"/><rect x="3" y="389" width="3" height="19" fill="#00FF00"/><rect x="3" y="390" width="2" height="17" fill="#fff"/><rect x="11" y="399" width="1" height="10" fill="#00FF00"/><rect x="9" y="399" width="5" height="11" fill="#00FF00"/><rect x="10" y="400" width="3" height="9" fill="#000"/><rect x="19" y="365" width="1" height="32" fill="#00FF00"/><rect x="17" y="381" width="5" height="12" fill="#00FF00"/><rect x="18" y="382" width="3" height="10" fill="#000"/><rect x="27" y="375" width="1" height="15" fill="#00FF00"/><rect x="25" y="381" width="5" height="8" fill="#00FF00"/><rect x="26" y="382" width="3" height="6" fill="#fff"/><rect x="35" y="346" width="1" height="30" fill="#00FF00"/><rect x="33" y="348" width="5" height="21" fill="#00FF00"/><rect x="34" y="349" width="3" height="19" fill="#000"/><rect x="43" y="346" width="1" height="10" fill="#00FF00"/><rect x="41" y="348" width="5" height="3" fill="#00FF00"/><rect x="42" y="349" width="3" height="1" fill="#fff"/><rect x="51" y="336" width="1" height="21" fill="#00FF00"/><rect x="49" y="344" width="5" height="7" fill="#00FF00"/><rect x="50" y="345" width="3" height="5" fill="#fff"/><rect x="59" y="341" width="1" height="12" fill="#00FF00"/><rect x="57" y="342" width="5" height="10" fill="#00FF00"/><rect x="58" y="343" width="3" height="8" fill="#000"/><rect x="67" y="337" width="1" height="17" fill="#00FF00"/><rect x="65" y="343" width="5" height="6" fill="#00FF00"/><rect x="66" y="344" width="3" height="4" fill="#000"/><rect x="75" y="339" width="1" height="9" fill="#00FF00"/><rect x="73" y="342" width="5" height="4" fill="#00FF00"/><rect x="74" y="343" width="3" height="2" fill="#fff"/><rect x="83" y="316" width="1" height="22" fill="#00FF00"/><rect x="81" y="317" width="5" height="22" fill="#00FF00"/><rect x="82" y="318" width="3" height="20" fill="#000"/><rect x="91" y="311" width="1" height="7" fill="#00FF00"/><rect x="89" y="311" width="5" height="7" fill="#00FF00"/><rect x="90" y="312" width="3" height="5" fill="#000"/><rect x="99" y="298" width="1" height="18" fill="#00FF00"/><rect x="97" y="311" width="5" height="3" fill="#00FF00"/><rect x="98" y="312" width="3" height="1" fill="#fff"/><rect x="107" y="297" width="1" height="22" fill="#00FF00"/><rect x="105" y="298" width="5" height="16" fill="#00FF00"/><rect x="106" y="299" width="3" height="14" fill="#000"/><rect x="115" y="299" width="1" height="30" fill="#00FF00"/><rect x="113" y="305" width="5" height="1" fill="#00FF00"/><rect x="123" y="298" width="1" height="18" fill="#00FF00"/><rect x="121" y="304" width="5" height="2" fill="#00FF00"/><rect x="131" y="284" width="1" height="17" fill="#00FF00"/><rect x="129" y="285" width="5" height="10" fill="#00FF00"/><rect x="130" y="286" width="3" height="8" fill="#fff"/><rect x="139" y="284" width="1" height="11" fill="#00FF00"/><rect x="137" y="285" width="5" height="10" fill="#00FF00"/><rect x="138" y="286" width="3" height="8" fill="#000"/><rect x="147" y="245" width="1" height="40" fill="#00FF00"/><rect x="145" y="248" width="5" height="34" fill="#00FF00"/><rect x="146" y="249" width="3" height="32" fill="#000"/><rect x="155" y="246" width="1" height="20" fill="#00FF00"/><rect x="153" y="248" width="5" height="8" fill="#00FF00"/><rect x="154" y="249" width="3" height="6" fill="#fff"/><rect x="163" y="255" width="1" height="36" fill="#00FF00"/><rect x="161" y="255" width="5" height="17" fill="#00FF00"/><rect x="162" y="256" width="3" height="15" fill="#fff"/><rect x="171" y="264" width="1" height="10" fill="#00FF00"/><rect x="169" y="270" width="5" height="3" fill="#00FF00"/><rect x="170" y="271" width="3" height="1" fill="#fff"/><rect x="179" y="259" width="1" height="24" fill="#00FF00"/><rect x="177" y="261" width="5" height="5" fill="#00FF00"/><rect x="178" y="262" width="3" height="3" fill="#fff"/><rect x="187" y="264" width="1" height="12" fill="#00FF00"/><rect x="185" y="265" width="5" height="3" fill="#00FF00"/><rect x="186" y="266" width="3" height="1" fill="#fff"/><rect x="195" y="271" width="1" height="18" fill="#00FF00"/><rect x="193" y="271" width="5" height="10" fill="#00FF00"/><rect x="194" y="272" width="3" height="8" fill="#fff"/><rect x="203" y="269" width="1" height="12" fill="#00FF00"/><rect x="201" y="270" width="5" height="11" fill="#00FF00"/><rect x="202" y="271" width="3" height="9" fill="#000"/><rect x="211" y="257" width="1" height="16" fill="#00FF00"/><rect x="209" y="267" width="5" height="4" fill="#00FF00"/><rect x="210" y="268" width="3" height="2" fill="#000"/><rect x="219" y="262" width="1" height="7" fill="#00FF00"/><rect x="217" y="264" width="5" height="4" fill="#00FF00"/><rect x="218" y="265" width="3" height="2" fill="#000"/><rect x="227" y="257" width="1" height="14" fill="#00FF00"/><rect x="225" y="264" width="5" height="1" fill="#00FF00"/><rect x="235" y="261" width="1" height="10" fill="#00FF00"/><rect x="233" y="264" width="5" height="4" fill="#00FF00"/><rect x="234" y="265" width="3" height="2" fill="#fff"/><rect x="243" y="263" width="1" height="14" fill="#00FF00"/><rect x="241" y="267" width="5" height="4" fill="#00FF00"/><rect x="242" y="268" width="3" height="2" fill="#000"/><rect x="251" y="248" width="1" height="21" fill="#00FF00"/><rect x="249" y="249" width="5" height="19" fill="#00FF00"/><rect x="250" y="250" width="3" height="17" fill="#000"/><rect x="259" y="220" width="1" height="35" fill="#00FF00"/><rect x="257" y="222" width="5" height="33" fill="#00FF00"/><rect x="258" y="223" width="3" height="31" fill="#000"/><rect x="267" y="213" width="1" height="14" fill="#00FF00"/><rect x="265" y="217" width="5" height="6" fill="#00FF00"/><rect x="266" y="218" width="3" height="4" fill="#000"/><rect x="275" y="171" width="1" height="40" fill="#00FF00"/><rect x="273" y="179" width="5" height="29" fill="#00FF00"/><rect x="274" y="180" width="3" height="27" fill="#000"/><rect x="283" y="176" width="1" height="22" fill="#00FF00"/><rect x="281" y="178" width="5" height="8" fill="#00FF00"/><rect x="282" y="179" width="3" height="6" fill="#fff"/><rect x="291" y="158" width="1" height="21" fill="#00FF00"/><rect x="289" y="161" width="5" height="17" fill="#00FF00"/><rect x="290" y="162" width="3" height="15" fill="#000"/><rect x="299" y="156" width="1" height="13" fill="#00FF00"/><rect x="297" y="156" width="5" height="7" fill="#00FF00"/><rect x="298" y="157" width="3" height="5" fill="#000"/><rect x="307" y="156" width="1" height="13" fill="#00FF00"/><rect x="305" y="156" width="5" height="6" fill="#00FF00"/><rect x="306" y="157" width="3" height="4" fill="#000"/><rect x="315" y="137" width="1" height="38" fill="#00FF00"/><rect x="313" y="156" width="5" height="6" fill="#00FF00"/><rect x="314" y="157" width="3" height="4" fill="#fff"/><rect x="323" y="155" width="1" height="10" fill="#00FF00"/><rect x="321" y="160" width="5" height="1" fill="#00FF00"/><rect x="331" y="134" width="1" height="29" fill="#00FF00"/><rect x="329" y="135" width="5" height="26" fill="#00FF00"/><rect x="330" y="136" width="3" height="24" fill="#000"/><rect x="339" y="125" width="1" height="12" fill="#00FF00"/><rect x="337" y="130" width="5" height="6" fill="#00FF00"/><rect x="338" y="131" width="3" height="4" fill="#000"/><rect x="347" y="124" width="1" height="41" fill="#00FF00"/><rect x="345" y="129" width="5" height="15" fill="#00FF00"/><rect x="346" y="130" width="3" height="13" fill="#fff"/><rect x="355" y="136" width="1" height="12" fill="#00FF00"/><rect x="353" y="143" width="5" height="4" fill="#00FF00"/><rect x="354" y="144" width="3" height="2" fill="#fff"/><rect x="363" y="100" width="1" height="42" fill="#00FF00"/><rect x="361" y="108" width="5" height="33" fill="#00FF00"/><rect x="362" y="109" width="3" height="31" fill="#000"/><rect x="371" y="104" width="1" height="11" fill="#00FF00"/><rect x="369" y="108" width="5" height="5" fill="#00FF00"/><rect x="370" y="109" width="3" height="3" fill="#fff"/><rect x="379" y="88" width="1" height="30" fill="#00FF00"/><rect x="377" y="92" width="5" height="17" fill="#00FF00"/><rect x="378" y="93" width="3" height="15" fill="#fff"/><rect x="387" y="105" width="1" height="13" fill="#00FF00"/><rect x="385" y="108" width="5" height="4" fill="#00FF00"/><rect x="386" y="109" width="3" height="2" fill="#fff"/><rect x="395" y="71" width="1" height="35" fill="#00FF00"/><rect x="393" y="73" width="5" height="30" fill="#00FF00"/><rect x="394" y="74" width="3" height="28" fill="#000"/><rect x="403" y="61" width="1" height="16" fill="#00FF00"/><rect x="401" y="64" width="5" height="11" fill="#00FF00"/><rect x="402" y="65" width="3" height="9" fill="#000"/><rect x="411" y="40" width="1" height="49" fill="#00FF00"/><rect x="409" y="52" width="5" height="34" fill="#00FF00"/><rect x="410" y="53" width="3" height="32" fill="#fff"/><rect x="419" y="66" width="1" height="21" fill="#00FF00"/><rect x="417" y="84" width="5" height="3" fill="#00FF00"/><rect x="418" y="85" width="3" height="1" fill="#000"/><rect x="427" y="54" width="1" height="27" fill="#00FF00"/><rect x="425" y="64" width="5" height="14" fill="#00FF00"/><rect x="426" y="65" width="3" height="12" fill="#000"/><rect x="435" y="55" width="1" height="15" fill="#00FF00"/><rect x="433" y="56" width="5" height="6" fill="#00FF00"/><rect x="434" y="57" width="3" height="4" fill="#000"/><rect x="443" y="48" width="1" height="22" fill="#00FF00"/><rect x="441" y="50" width="5" height="7" fill="#00FF00"/><rect x="442" y="51" width="3" height="5" fill="#fff"/><rect x="449" y="57" width="5" height="2" fill="#00FF00"/><rect x="459" y="51" width="1" height="166" fill="#00FF00"/><rect x="457" y="59" width="5" height="66" fill="#00FF00"/><rect x="458" y="60" width="3" height="64" fill="#fff"/><rect x="467" y="109" width="1" height="42" fill="#00FF00"/><rect x="465" y="125" width="5" height="14" fill="#00FF00"/><rect x="466" y="126" width="3" height="12" fill="#fff"/><rect x="475" y="123" width="1" height="64" fill="#00FF00"/><rect x="473" y="132" width="5" height="42" fill="#00FF00"/><rect x="474" y="133" width="3" height="40" fill="#000"/><rect x="483" y="131" width="1" height="22" fill="#00FF00"/><rect x="481" y="132" width="5" height="16" fill="#00FF00"/><rect x="482" y="133" width="3" height="14" fill="#fff"/><rect x="491" y="111" width="1" height="26" fill="#00FF00"/><rect x="489" y="122" width="5" height="4" fill="#00FF00"/><rect x="490" y="123" width="3" height="2" fill="#fff"/><rect x="499" y="114" width="1" height="17" fill="#00FF00"/><rect x="497" y="119" width="5" height="7" fill="#00FF00"/><rect x="498" y="120" width="3" height="5" fill="#000"/><rect x="507" y="93" width="1" height="34" fill="#00FF00"/><rect x="505" y="116" width="5" height="6" fill="#00FF00"/><rect x="506" y="117" width="3" height="4" fill="#000"/><rect x="515" y="113" width="1" height="21" fill="#00FF00"/><rect x="513" y="116" width="5" height="15" fill="#00FF00"/><rect x="514" y="117" width="3" height="13" fill="#fff"/><rect x="523" y="116" width="1" height="22" fill="#00FF00"/><rect x="521" y="121" width="5" height="1" fill="#00FF00"/><rect x="531" y="121" width="1" height="26" fill="#00FF00"/><rect x="529" y="121" width="5" height="21" fill="#00FF00"/><rect x="530" y="122" width="3" height="19" fill="#fff"/><rect x="539" y="147" width="1" height="55" fill="#00FF00"/><rect x="537" y="157" width="5" height="41" fill="#00FF00"/><rect x="538" y="158" width="3" height="39" fill="#fff"/><rect x="547" y="184" width="1" height="26" fill="#00FF00"/><rect x="545" y="192" width="5" height="6" fill="#00FF00"/><rect x="546" y="193" width="3" height="4" fill="#000"/><rect x="555" y="184" width="1" height="73" fill="#00FF00"/><rect x="553" y="184" width="5" height="59" fill="#00FF00"/><rect x="554" y="185" width="3" height="57" fill="#000"/><rect x="563" y="153" width="1" height="35" fill="#00FF00"/><rect x="561" y="157" width="5" height="29" fill="#00FF00"/><rect x="562" y="158" width="3" height="27" fill="#000"/><rect x="571" y="142" width="1" height="44" fill="#00FF00"/><rect x="569" y="151" width="5" height="30" fill="#00FF00"/><rect x="570" y="152" width="3" height="28" fill="#fff"/><rect x="579" y="170" width="1" height="42" fill="#00FF00"/><rect x="577" y="180" width="5" height="22" fill="#00FF00"/><rect x="578" y="181" width="3" height="20" fill="#fff"/><rect x="587" y="164" width="1" height="35" fill="#00FF00"/><rect x="585" y="173" width="5" height="23" fill="#00FF00"/><rect x="586" y="174" width="3" height="21" fill="#000"/><rect x="595" y="171" width="1" height="45" fill="#00FF00"/><rect x="593" y="173" width="5" height="37" fill="#00FF00"/><rect x="594" y="174" width="3" height="35" fill="#fff"/><rect x="603" y="204" width="1" height="39" fill="#00FF00"/><rect x="601" y="228" width="5" height="6" fill="#00FF00"/><rect x="602" y="229" width="3" height="4" fill="#fff"/><rect x="611" y="213" width="1" height="39" fill="#00FF00"/><rect x="609" y="233" width="5" height="15" fill="#00FF00"/><rect x="610" y="234" width="3" height="13" fill="#fff"/><rect x="619" y="210" width="1" height="109" fill="#00FF00"/><rect x="617" y="222" width="5" height="33" fill="#00FF00"/><rect x="618" y="223" width="3" height="31" fill="#fff"/><rect x="627" y="246" width="1" height="44" fill="#00FF00"/><rect x="625" y="254" width="5" height="25" fill="#00FF00"/><rect x="626" y="255" width="3" height="23" fill="#fff"/><rect x="635" y="240" width="1" height="80" fill="#00FF00"/><rect x="633" y="271" width="5" height="46" fill="#00FF00"/><rect x="634" y="272" width="3" height="44" fill="#000"/><rect x="643" y="265" width="1" height="48" fill="#00FF00"/><rect x="641" y="271" width="5" height="39" fill="#00FF00"/><rect x="642" y="272" width="3" height="37" fill="#fff"/><rect x="651" y="284" width="1" height="26" fill="#00FF00"/><rect x="649" y="296" width="5" height="9" fill="#00FF00"/><rect x="650" y="297" width="3" height="7" fill="#000"/><rect x="659" y="246" width="1" height="57" fill="#00FF00"/><rect x="657" y="255" width="5" height="42" fill="#00FF00"/><rect x="658" y="256" width="3" height="40" fill="#000"/><rect x="667" y="206" width="1" height="24" fill="#00FF00"/><rect x="665" y="206" width="5" height="4" fill="#00FF00"/><rect x="666" y="207" width="3" height="2" fill="#fff"/><rect x="675" y="190" width="1" height="22" fill="#00FF00"/><rect x="673" y="190" width="5" height="19" fill="#00FF00"/><rect x="674" y="191" width="3" height="17" fill="#000"/><rect x="683" y="175" width="1" height="34" fill="#00FF00"/><rect x="681" y="194" width="5" height="5" fill="#00FF00"/><rect x="682" y="195" width="3" height="3" fill="#000"/><rect x="691" y="192" width="1" height="14" fill="#00FF00"/><rect x="689" y="194" width="5" height="13" fill="#00FF00"/><rect x="690" y="195" width="3" height="11" fill="#fff"/><rect x="699" y="170" width="1" height="33" fill="#00FF00"/><rect x="697" y="187" width="5" height="10" fill="#00FF00"/><rect x="698" y="188" width="3" height="8" fill="#000"/><rect x="707" y="179" width="1" height="15" fill="#00FF00"/><rect x="705" y="182" width="5" height="6" fill="#00FF00"/><rect x="706" y="183" width="3" height="4" fill="#000"/><rect x="715" y="174" width="1" height="17" fill="#00FF00"/><rect x="713" y="175" width="5" height="15" fill="#00FF00"/><rect x="714" y="176" width="3" height="13" fill="#fff"/><rect x="723" y="183" width="1" height="9" fill="#00FF00"/><rect x="721" y="189" width="5" height="1" fill="#00FF00"/><rect x="731" y="187" width="1" height="14" fill="#00FF00"/><rect x="729" y="190" width="5" height="12" fill="#00FF00"/><rect x="730" y="191" width="3" height="10" fill="#fff"/><rect x="739" y="171" width="1" height="31" fill="#00FF00"/><rect x="737" y="171" width="5" height="29" fill="#00FF00"/><rect x="738" y="172" width="3" height="27" fill="#000"/><rect x="747" y="149" width="1" height="24" fill="#00FF00"/><rect x="745" y="160" width="5" height="12" fill="#00FF00"/><rect x="746" y="161" width="3" height="10" fill="#000"/><rect x="755" y="144" width="1" height="23" fill="#00FF00"/><rect x="753" y="152" width="5" height="14" fill="#00FF00"/><rect x="754" y="153" width="3" height="12" fill="#000"/><rect x="763" y="150" width="1" height="16" fill="#00FF00"/><rect x="761" y="152" width="5" height="11" fill="#00FF00"/><rect x="762" y="153" width="3" height="9" fill="#fff"/><rect x="771" y="161" width="1" height="30" fill="#00FF00"/><rect x="769" y="168" width="5" height="18" fill="#00FF00"/><rect x="770" y="169" width="3" height="16" fill="#fff"/><rect x="779" y="181" width="1" height="19" fill="#00FF00"/><rect x="777" y="185" width="5" height="6" fill="#00FF00"/><rect x="778" y="186" width="3" height="4" fill="#fff"/><rect x="787" y="178" width="1" height="41" fill="#00FF00"/><rect x="785" y="185" width="5" height="32" fill="#00FF00"/><rect x="786" y="186" width="3" height="30" fill="#fff"/><rect x="795" y="210" width="1" height="28" fill="#00FF00"/><rect x="793" y="216" width="5" height="19" fill="#00FF00"/><rect x="794" y="217" width="3" height="17" fill="#fff"/><rect x="803" y="251" width="1" height="41" fill="#00FF00"/><rect x="801" y="256" width="5" height="36" fill="#00FF00"/><rect x="802" y="257" width="3" height="34" fill="#000"/><rect x="811" y="253" width="1" height="18" fill="#00FF00"/><rect x="809" y="256" width="5" height="1" fill="#00FF00"/><rect x="819" y="271" width="1" height="47" fill="#00FF00"/><rect x="817" y="278" width="5" height="35" fill="#00FF00"/><rect x="818" y="279" width="3" height="33" fill="#fff"/><rect x="827" y="310" width="1" height="29" fill="#00FF00"/><rect x="825" y="312" width="5" height="9" fill="#00FF00"/><rect x="826" y="313" width="3" height="7" fill="#fff"/><rect x="835" y="301" width="1" height="54" fill="#00FF00"/><rect x="833" y="315" width="5" height="5" fill="#00FF00"/><rect x="834" y="316" width="3" height="3" fill="#fff"/><rect x="843" y="297" width="1" height="47" fill="#00FF00"/><rect x="841" y="319" width="5" height="3" fill="#00FF00"/><rect x="842" y="320" width="3" height="1" fill="#fff"/><rect x="851" y="280" width="1" height="32" fill="#00FF00"/><rect x="849" y="289" width="5" height="14" fill="#00FF00"/><rect x="850" y="290" width="3" height="12" fill="#000"/><rect x="859" y="210" width="1" height="61" fill="#00FF00"/><rect x="857" y="212" width="5" height="52" fill="#00FF00"/><rect x="858" y="213" width="3" height="50" fill="#000"/><rect x="867" y="198" width="1" height="16" fill="#00FF00"/><rect x="865" y="204" width="5" height="10" fill="#00FF00"/><rect x="866" y="205" width="3" height="8" fill="#000"/><rect x="875" y="174" width="1" height="65" fill="#00FF00"/><rect x="873" y="186" width="5" height="34" fill="#00FF00"/><rect x="874" y="187" width="3" height="32" fill="#fff"/><rect x="883" y="188" width="1" height="33" fill="#00FF00"/><rect x="881" y="201" width="5" height="19" fill="#00FF00"/><rect x="882" y="202" width="3" height="17" fill="#000"/><rect x="891" y="193" width="1" height="64" fill="#00FF00"/><rect x="889" y="193" width="5" height="56" fill="#00FF00"/><rect x="890" y="194" width="3" height="54" fill="#fff"/><rect x="899" y="247" width="1" height="21" fill="#00FF00"/><rect x="897" y="248" width="5" height="11" fill="#00FF00"/><rect x="898" y="249" width="3" height="9" fill="#fff"/><rect x="907" y="185" width="1" height="40" fill="#00FF00"/><rect x="905" y="215" width="5" height="2" fill="#00FF00"/><rect x="915" y="212" width="1" height="54" fill="#00FF00"/><rect x="913" y="216" width="5" height="24" fill="#00FF00"/><rect x="914" y="217" width="3" height="22" fill="#fff"/><rect x="923" y="233" width="1" height="37" fill="#00FF00"/><rect x="921" y="262" width="5" height="1" fill="#00FF00"/><rect x="931" y="243" width="1" height="32" fill="#00FF00"/><rect x="929" y="248" width="5" height="14" fill="#00FF00"/><rect x="930" y="249" width="3" height="12" fill="#000"/><rect x="939" y="244" width="1" height="69" fill="#00FF00"/><rect x="937" y="247" width="5" height="59" fill="#00FF00"/><rect x="938" y="248" width="3" height="57" fill="#fff"/><rect x="947" y="286" width="1" height="24" fill="#00FF00"/><rect x="945" y="305" width="5" height="4" fill="#00FF00"/><rect x="946" y="306" width="3" height="2" fill="#fff"/><rect x="955" y="293" width="1" height="50" fill="#00FF00"/><rect x="953" y="305" width="5" height="34" fill="#00FF00"/><rect x="954" y="306" width="3" height="32" fill="#fff"/><rect x="963" y="287" width="1" height="29" fill="#00FF00"/><rect x="961" y="289" width="5" height="6" fill="#00FF00"/><rect x="962" y="290" width="3" height="4" fill="#fff"/><rect x="971" y="268" width="1" height="33" fill="#00FF00"/><rect x="969" y="269" width="5" height="26" fill="#00FF00"/><rect x="970" y="270" width="3" height="24" fill="#000"/><rect x="979" y="221" width="1" height="58" fill="#00FF00"/><rect x="977" y="243" width="5" height="28" fill="#00FF00"/><rect x="978" y="244" width="3" height="26" fill="#000"/><rect x="987" y="239" width="1" height="17" fill="#00FF00"/><rect x="985" y="243" width="5" height="11" fill="#00FF00"/><rect x="986" y="244" width="3" height="9" fill="#fff"/><rect x="995" y="208" width="1" height="41" fill="#00FF00"/><rect x="993" y="216" width="5" height="22" fill="#00FF00"/><rect x="994" y="217" width="3" height="20" fill="#000"/><rect x="1003" y="191" width="1" height="30" fill="#00FF00"/><rect x="1001" y="193" width="5" height="24" fill="#00FF00"/><rect x="1002" y="194" width="3" height="22" fill="#000"/><rect x="1011" y="181" width="1" height="31" fill="#00FF00"/><rect x="1009" y="181" width="5" height="15" fill="#00FF00"/><rect x="1010" y="182" width="3" height="13" fill="#000"/><rect x="1019" y="165" width="1" height="20" fill="#00FF00"/><rect x="1017" y="170" width="5" height="12" fill="#00FF00"/><rect x="1018" y="171" width="3" height="10" fill="#000"/><rect x="1027" y="152" width="1" height="27" fill="#00FF00"/><rect x="1025" y="167" width="5" height="3" fill="#00FF00"/><rect x="1026" y="168" width="3" height="1" fill="#fff"/><rect x="1035" y="164" width="1" height="21" fill="#00FF00"/><rect x="1033" y="169" width="5" height="11" fill="#00FF00"/><rect x="1034" y="170" width="3" height="9" fill="#fff"/><rect x="1043" y="195" width="1" height="54" fill="#00FF00"/><rect x="1041" y="197" width="5" height="22" fill="#00FF00"/><rect x="1042" y="198" width="3" height="20" fill="#fff"/><rect x="1051" y="209" width="1" height="55" fill="#00FF00"/><rect x="1049" y="218" width="5" height="43" fill="#00FF00"/><rect x="1050" y="219" width="3" height="41" fill="#fff"/><rect x="1059" y="74" width="1" height="55" fill="#00FF00"/><rect x="1057" y="84" width="5" height="2" fill="#00FF00"/><rect x="1067" y="83" width="1" height="50" fill="#00FF00"/><rect x="1065" y="85" width="5" height="45" fill="#00FF00"/><rect x="1066" y="86" width="3" height="43" fill="#fff"/><rect x="1075" y="87" width="1" height="41" fill="#00FF00"/><rect x="1073" y="92" width="5" height="19" fill="#00FF00"/><rect x="1074" y="93" width="3" height="17" fill="#000"/><rect x="1083" y="52" width="1" height="44" fill="#00FF00"/><rect x="1081" y="58" width="5" height="35" fill="#00FF00"/><rect x="1082" y="59" width="3" height="33" fill="#000"/><rect x="1091" y="35" width="1" height="39" fill="#00FF00"/><rect x="1089" y="48" width="5" height="24" fill="#00FF00"/><rect x="1090" y="49" width="3" height="22" fill="#000"/><rect x="1099" y="43" width="1" height="59" fill="#00FF00"/><rect x="1097" y="48" width="5" height="47" fill="#00FF00"/><rect x="1098" y="49" width="3" height="45" fill="#fff"/><rect x="1107" y="69" width="1" height="48" fill="#00FF00"/><rect x="1105" y="76" width="5" height="21" fill="#00FF00"/><rect x="1106" y="77" width="3" height="19" fill="#fff"/><rect x="1115" y="63" width="1" height="43" fill="#00FF00"/><rect x="1113" y="65" width="5" height="33" fill="#00FF00"/><rect x="1114" y="66" width="3" height="31" fill="#000"/><rect x="1123" y="54" width="1" height="32" fill="#00FF00"/><rect x="1121" y="65" width="5" height="9" fill="#00FF00"/><rect x="1122" y="66" width="3" height="7" fill="#fff"/><rect x="1131" y="60" width="1" height="16" fill="#00FF00"/><rect x="1129" y="65" width="5" height="8" fill="#00FF00"/><rect x="1130" y="66" width="3" height="6" fill="#000"/><rect x="1139" y="28" width="1" height="43" fill="#00FF00"/><rect x="1137" y="39" width="5" height="31" fill="#00FF00"/><rect x="1138" y="40" width="3" height="29" fill="#000"/><rect x="1147" y="25" width="1" height="26" fill="#00FF00"/><rect x="1145" y="39" width="5" height="6" fill="#00FF00"/><rect x="1146" y="40" width="3" height="4" fill="#fff"/><rect x="1155" y="30" width="1" height="19" fill="#00FF00"/><rect x="1153" y="38" width="5" height="2" fill="#00FF00"/><rect x="1163" y="35" width="1" height="16" fill="#00FF00"/><rect x="1161" y="38" width="5" height="6" fill="#00FF00"/><rect x="1162" y="39" width="3" height="4" fill="#000"/><rect x="1171" y="30" width="1" height="17" fill="#00FF00"/><rect x="1169" y="34" width="5" height="1" fill="#00FF00"/><rect x="3" y="407" width="1" height="29" fill="#32CD32"/><rect x="11" y="425" width="1" height="11" fill="#32CD32"/><rect x="19" y="412" width="1" height="24" fill="#32CD32"/><rect x="27" y="422" width="1" height="14" fill="#32CD32"/><rect x="35" y="418" width="1" height="18" fill="#32CD32"/><rect x="43" y="423" width="1" height="13" fill="#32CD32"/><rect x="51" y="417" width="1" height="19" fill="#32CD32"/><rect x="59" y="429" width="1" height="7" fill="#32CD32"/><rect x="67" y="417" width="1" height="19" fill="#32CD32"/><rect x="75" y="426" width="1" height="10" fill="#32CD32"/><rect x="83" y="421" width="1" height="15" fill="#32CD32"/><rect x="91" y="430" width="1" height="6" fill="#32CD32"/><rect x="99" y="420" width="1" height="16" fill="#32CD32"/><rect x="107" y="418" width="1" height="18" fill="#32CD32"/><rect x="115" y="414" width="1" height="22" fill="#32CD32"/><rect x="123" y="424" width="1" height="12" fill="#32CD32"/><rect x="131" y="419" width="1" height="17" fill="#32CD32"/><rect x="139" y="431" width="1" height="5" fill="#32CD32"/><rect x="147" y="418" width="1" height="18" fill="#32CD32"/><rect x="155" y="427" width="1" height="9" fill="#32CD32"/><rect x="163" y="419" width="1" height="17" fill="#32CD32"/><rect x="171" y="430" width="1" height="6" fill="#32CD32"/><rect x="179" y="418" width="1" height="18" fill="#32CD32"/><rect x="187" y="428" width="1" height="8" fill="#32CD32"/><rect x="195" y="420" width="1" height="16" fill="#32CD32"/><rect x="203" y="432" width="1" height="4" fill="#32CD32"/><rect x="211" y="420" width="1" height="16" fill="#32CD32"/><rect x="219" y="431" width="1" height="5" fill="#32CD32"/><rect x="227" y="424" width="1" height="12" fill="#32CD32"/><rect x="235" y="432" width="1" height="4" fill="#32CD32"/><rect x="243" y="424" width="1" height="12" fill="#32CD32"/><rect x="251" y="429" width="1" height="7" fill="#32CD32"/><rect x="259" y="420" width="1" height="16" fill="#32CD32"/><rect x="267" y="431" width="1" height="5" fill="#32CD32"/><rect x="275" y="412" width="1" height="24" fill="#32CD32"/><rect x="283" y="419" width="1" height="17" fill="#32CD32"/><rect x="291" y="420" width="1" height="16" fill="#32CD32"/><rect x="299" y="431" width="1" height="5" fill="#32CD32"/><rect x="307" y="432" width="1" height="4" fill="#32CD32"/><rect x="315" y="410" width="1" height="26" fill="#32CD32"/><rect x="323" y="428" width="1" height="8" fill="#32CD32"/><rect x="331" y="422" width="1" height="14" fill="#32CD32"/><rect x="339" y="429" width="1" height="7" fill="#32CD32"/><rect x="347" y="412" width="1" height="24" fill="#32CD32"/><rect x="355" y="422" width="1" height="14" fill="#32CD32"/><rect x="363" y="415" width="1" height="21" fill="#32CD32"/><rect x="371" y="428" width="1" height="8" fill="#32CD32"/><rect x="379" y="410" width="1" height="26" fill="#32CD32"/><rect x="387" y="421" width="1" height="15" fill="#32CD32"/><rect x="395" y="421" width="1" height="15" fill="#32CD32"/><rect x="403" y="429" width="1" height="7" fill="#32CD32"/><rect x="411" y="409" width="1" height="27" fill="#32CD32"/><rect x="419" y="422" width="1" height="14" fill="#32CD32"/><rect x="427" y="420" width="1" height="16" fill="#32CD32"/><rect x="435" y="430" width="1" height="6" fill="#32CD32"/><rect x="443" y="421" width="1" height="15" fill="#32CD32"/><rect x="459" y="382" width="1" height="54" fill="#32CD32"/><rect x="467" y="412" width="1" height="24" fill="#32CD32"/><rect x="475" y="401" width="1" height="35" fill="#32CD32"/><rect x="483" y="423" width="1" height="13" fill="#32CD32"/><rect x="491" y="402" width="1" height="34" fill="#32CD32"/><rect x="499" y="426" width="1" height="10" fill="#32CD32"/><rect x="507" y="413" width="1" height="23" fill="#32CD32"/><rect x="515" y="428" width="1" height="8" fill="#32CD32"/><rect x="523" y="419" width="1" height="17" fill="#32CD32"/><rect x="531" y="429" width="1" height="7" fill="#32CD32"/><rect x="539" y="412" width="1" height="24" fill="#32CD32"/><rect x="547" y="417" width="1" height="19" fill="#32CD32"/><rect x="555" y="400" width="1" height="36" fill="#32CD32"/><rect x="563" y="419" width="1" height="17" fill="#32CD32"/><rect x="571" y="405" width="1" height="31" fill="#32CD32"/><rect x="579" y="417" width="1" height="19" fill="#32CD32"/><rect x="587" y="411" width="1" height="25" fill="#32CD32"/><rect x="595" y="417" width="1" height="19" fill="#32CD32"/><rect x="603" y="394" width="1" height="42" fill="#32CD32"/><rect x="611" y="417" width="1" height="19" fill="#32CD32"/><rect x="619" y="388" width="1" height="48" fill="#32CD32"/><rect x="627" y="399" width="1" height="37" fill="#32CD32"/><rect x="635" y="394" width="1" height="42" fill="#32CD32"/><rect x="643" y="405" width="1" height="31" fill="#32CD32"/><rect x="651" y="397" width="1" height="39" fill="#32CD32"/><rect x="659" y="402" width="1" height="34" fill="#32CD32"/><rect x="667" y="408" width="1" height="28" fill="#32CD32"/><rect x="675" y="419" width="1" height="17" fill="#32CD32"/><rect x="683" y="408" width="1" height="28" fill="#32CD32"/><rect x="691" y="424" width="1" height="12" fill="#32CD32"/><rect x="699" y="415" width="1" height="21" fill="#32CD32"/><rect x="707" y="428" width="1" height="8" fill="#32CD32"/><rect x="715" y="419" width="1" height="17" fill="#32CD32"/><rect x="723" y="430" width="1" height="6" fill="#32CD32"/><rect x="731" y="424" width="1" height="12" fill="#32CD32"/><rect x="739" y="425" width="1" height="11" fill="#32CD32"/><rect x="747" y="428" width="1" height="8" fill="#32CD32"/><rect x="755" y="420" width="1" height="16" fill="#32CD32"/><rect x="763" y="429" width="1" height="7" fill="#32CD32"/><rect x="771" y="419" width="1" height="17" fill="#32CD32"/><rect x="779" y="425" width="1" height="11" fill="#32CD32"/><rect x="787" y="418" width="1" height="18" fill="#32CD32"/><rect x="795" y="423" width="1" height="13" fill="#32CD32"/><rect x="803" y="417" width="1" height="19" fill="#32CD32"/><rect x="811" y="420" width="1" height="16" fill="#32CD32"/><rect x="819" y="403" width="1" height="33" fill="#32CD32"/><rect x="827" y="415" width="1" height="21" fill="#32CD32"/><rect x="835" y="396" width="1" height="40" fill="#32CD32"/><rect x="843" y="404" width="1" height="32" fill="#32CD32"/><rect x="851" y="406" width="1" height="30" fill="#32CD32"/><rect x="859" y="408" width="1" height="28" fill="#32CD32"/><rect x="867" y="419" width="1" height="17" fill="#32CD32"/><rect x="875" y="394" width="1" height="42" fill="#32CD32"/><rect x="883" y="420" width="1" height="16" fill="#32CD32"/><rect x="891" y="401" width="1" height="35" fill="#32CD32"/><rect x="899" y="416" width="1" height="20" fill="#32CD32"/><rect x="907" y="407" width="1" height="29" fill="#32CD32"/><rect x="915" y="401" width="1" height="35" fill="#32CD32"/><rect x="923" y="394" width="1" height="42" fill="#32CD32"/><rect x="931" y="406" width="1" height="30" fill="#32CD32"/><rect x="939" y="388" width="1" height="48" fill="#32CD32"/><rect x="947" y="410" width="1" height="26" fill="#32CD32"/><rect x="955" y="399" width="1" height="37" fill="#32CD32"/><rect x="963" y="399" width="1" height="37" fill="#32CD32"/><rect x="971" y="419" width="1" height="17" fill="#32CD32"/><rect x="979" y="402" width="1" height="34" fill="#32CD32"/><rect x="987" y="426" width="1" height="10" fill="#32CD32"/><rect x="995" y="400" width="1" height="36" fill="#32CD32"/><rect x="1003" y="419" width="1" height="17" fill="#32CD32"/><rect x="1011" y="408" width="1" height="28" fill="#32CD32"/><rect x="1019" y="428" width="1" height="8" fill="#32CD32"/><rect x="1027" y="410" width="1" height="26" fill="#32CD32"/><rect x="1035" y="424" width="1" height="12" fill="#32CD32"/><rect x="1043" y="399" width="1" height="37" fill="#32CD32"/><rect x="1051" y="414" width="1" height="22" fill="#32CD32"/><rect x="1059" y="395" width="1" height="41" fill="#32CD32"/><rect x="1067" y="403" width="1" height="33" fill="#32CD32"/><rect x="1075" y="397" width="1" height="39" fill="#32CD32"/><rect x="1083" y="417" width="1" height="19" fill="#32CD32"/><rect x="1091" y="398" width="1" height="38" fill="#32CD32"/><rect x="1099" y="410" width="1" height="26" fill="#32CD32"/><rect x="1107" y="394" width="1" height="42" fill="#32CD32"/><rect x="1115" y="406" width="1" height="30" fill="#32CD32"/><rect x="1123" y="400" width="1" height="36" fill="#32CD32"/><rect x="1131" y="419" width="1" height="17" fill="#32CD32"/><rect x="1139" y="403" width="1" height="33" fill="#32CD32"/><rect x="1147" y="417" width="1" height="19" fill="#32CD32"/><rect x="1155" y="413" width="1" height="23" fill="#32CD32"/><rect x="1163" y="431" width="1" height="5" fill="#32CD32"/><rect x="1171" y="423" width="1" height="13" fill="#32CD32"/><rect x="2" y="2" width="1479" height="1" fill="#fff"/><rect x="2" y="2" width="1" height="435" fill="#fff"/><rect x="2" y="436" width="1479" height="1" fill="#fff"/><rect x="1480" y="2" width="1" height="435" fill="#fff"/><rect x="3" y="437" width="1" height="3" fill="#fff"/><rect x="67" y="437" width="1" height="3" fill="#fff"/><rect x="131" y="437" width="1" height="3" fill="#fff"/><rect x="195" y="437" width="1" height="3" fill="#fff"/><rect x="259" y="437" width="1" height="3" fill="#fff"/><rect x="323" y="437" width="1" height="3" fill="#fff"/><rect x="387" y="437" width="1" height="3" fill="#fff"/><rect x="451" y="437" width="1" height="3" fill="#fff"/><rect x="515" y="437" width="1" height="3" fill="#fff"/><rect x="579" y="437" width="1" height="3" fill="#fff"/><rect x="643" y="437" width="1" height="3" fill="#fff"/><rect x="707" y="437" width="1" height="3" fill="#fff"/><rect x="771" y="437" width="1" height="3" fill="#fff"/><rect x="835" y="437" width="1" height="3" fill="#fff"/><rect x="899" y="437" width="1" height="3" fill="#fff"/><rect x="963" y="437" width="1" height="3" fill="#fff"/><rect x="1027" y="437" width="1" height="3" fill="#fff"/><rect x="1091" y="437" width="1" height="3" fill="#fff"/><rect x="1155" y="437" width="1" height="3" fill="#fff"/><rect x="1481" y="4" width="2" height="1" fill="#fff"/><rect x="1481" y="37" width="2" height="1" fill="#fff"/><rect x="1481" y="70" width="2" height="1" fill="#fff"/><rect x="1481" y="103" width="2" height="1" fill="#fff"/><rect x="1481" y="136" width="2" height="1" fill="#fff"/><rect x="1481" y="169" width="2" height="1" fill="#fff"/><rect x="1481" y="202" width="2" height="1" fill="#fff"/><rect x="1481" y="235" width="2" height="1" fill="#fff"/><rect x="1481" y="268" width="2" height="1" fill="#fff"/><rect x="1481" y="301" width="2" height="1" fill="#fff"/><rect x="1481" y="334" width="2" height="1" fill="#fff"/><rect x="1481" y="367" width="2" height="1" fill="#fff"/><rect x="1481" y="400" width="2" height="1" fill="#fff"/><rect x="1481" y="433" width="2" height="1" fill="#fff"/><path d="M1179 3h9l-4.500 4.500z" fill="#778899" shape-rendering="auto"/><path d="M6 13h7l-3.500-4z" fill="#fff" shape-rendering="auto"/></svg>
<div style="left:1918px;top:94px;width:1px;height:455px;background:#808080"></div>
<div style="left:1919px;top:94px;width:1px;height:455px;background:#fff"></div>
<div style="left:398px;top:548px;width:1522px;height:1px;background:#D4D0C8"></div>
<div style="left:398px;top:549px;width:1522px;height:1px;background:#fff"></div>
<div style="left:398px;top:550px;width:1522px;height:1px;background:#000"></div>
<span class="t" style="left:416px;top:99px;font-size:10px;color:#fff;line-height:12px;height:12px;letter-spacing:0px">#AAPL,H4</span>
<span class="ax" style="left:399px;top:534px;letter-spacing:-0.35px">21 Oct 2014</span>
<span class="ax" style="left:463px;top:534px;letter-spacing:-0.35px">27 Oct 15:00</span>
<span class="ax" style="left:527px;top:534px;letter-spacing:-0.35px">31 Oct 15:00</span>
<span class="ax" style="left:591px;top:534px;letter-spacing:-0.35px">6 Nov 16:00</span>
<span class="ax" style="left:655px;top:534px;letter-spacing:-0.35px">12 Nov 16:00</span>
<span class="ax" style="left:719px;top:534px;letter-spacing:-0.35px">17 Nov 20:00</span>
<span class="ax" style="left:783px;top:534px;letter-spacing:-0.35px">21 Nov 20:00</span>
<span class="ax" style="left:847px;top:534px;letter-spacing:-0.35px">28 Nov 20:00</span>
<span class="ax" style="left:911px;top:534px;letter-spacing:-0.35px">4 Dec 20:00</span>
<span class="ax" style="left:975px;top:534px;letter-spacing:-0.35px">10 Dec 20:00</span>
<span class="ax" style="left:1039px;top:534px;letter-spacing:-0.35px">16 Dec 20:00</span>
<span class="ax" style="left:1103px;top:534px;letter-spacing:-0.35px">22 Dec 20:00</span>
<span class="ax" style="left:1167px;top:534px;letter-spacing:-0.35px">30 Dec 16:00</span>
<span class="ax" style="left:1231px;top:534px;letter-spacing:-0.35px">6 Jan 16:00</span>
<span class="ax" style="left:1295px;top:534px;letter-spacing:-0.35px">12 Jan 20:00</span>
<span class="ax" style="left:1359px;top:534px;letter-spacing:-0.35px">20 Jan 16:00</span>
<span class="ax" style="left:1423px;top:534px;letter-spacing:-0.35px">26 Jan 16:00</span>
<span class="ax" style="left:1487px;top:534px;letter-spacing:-0.35px">30 Jan 16:00</span>
<span class="ax" style="left:1551px;top:534px;letter-spacing:-0.35px">5 Feb 16:00</span>
<span class="ax" style="left:1884px;top:93px;letter-spacing:-0.3px">121.50</span>
<span class="ax" style="left:1884px;top:126px;letter-spacing:-0.3px">119.90</span>
<span class="ax" style="left:1884px;top:159px;letter-spacing:-0.3px">118.30</span>
<span class="ax" style="left:1884px;top:192px;letter-spacing:-0.3px">116.70</span>
<span class="ax" style="left:1884px;top:225px;letter-spacing:-0.3px">115.10</span>
<span class="ax" style="left:1884px;top:258px;letter-spacing:-0.3px">113.55</span>
<span class="ax" style="left:1884px;top:291px;letter-spacing:-0.3px">111.95</span>
<span class="ax" style="left:1884px;top:324px;letter-spacing:-0.3px">110.35</span>
<span class="ax" style="left:1884px;top:357px;letter-spacing:-0.3px">108.75</span>
<span class="ax" style="left:1884px;top:390px;letter-spacing:-0.3px">107.20</span>
<span class="ax" style="left:1884px;top:423px;letter-spacing:-0.3px">105.60</span>
<span class="ax" style="left:1884px;top:456px;letter-spacing:-0.3px">104.00</span>
<span class="ax" style="left:1884px;top:489px;letter-spacing:-0.3px">102.40</span>
<span class="ax" style="left:1884px;top:522px;letter-spacing:-0.3px">100.80</span>
<div style="left:1881px;top:122px;width:35px;height:11px;background:#fff"></div>
<span class="ax" style="left:1884px;top:123px;color:#000;letter-spacing:-0.3px">120.02</span>
<div style="left:404px;top:112px;width:187px;height:54px;background:#000"></div>
<div style="left:404px;top:112px;width:45px;height:21px;background:linear-gradient(#5858FF,#3838E0)"></div>
<div style="left:404px;top:133px;width:93px;height:33px;background:linear-gradient(#3434DC,#0000A8)"></div>
<div style="left:408px;top:132px;width:36px;height:1px;background:#8080FF"></div>
<div style="left:548px;top:112px;width:43px;height:21px;background:linear-gradient(#5858FF,#3838E0)"></div>
<div style="left:499px;top:133px;width:92px;height:33px;background:linear-gradient(#3434DC,#0000A8)"></div>
<div style="left:551px;top:132px;width:36px;height:1px;background:#8080FF"></div>
<span class="t" style="left:413px;top:116px;color:#fff;letter-spacing:-1px">SELL</span>
<span class="t" style="left:558px;top:116px;color:#fff;letter-spacing:-1px">BUY</span>
<div style="left:451px;top:113px;width:17px;height:16px;background:#D4D0C8;border:1px solid #F4F4F4"></div>
<svg style="left:456px;top:119px;width:7px;height:4px" viewBox="0 0 7 4"><path d="M0 0h7l-3.500 4z" fill="#000"/></svg>
<div style="left:468px;top:113px;width:59px;height:16px;background:#fff"></div>
<div style="left:528px;top:113px;width:17px;height:16px;background:#D4D0C8;border:1px solid #F4F4F4"></div>
<svg style="left:533px;top:118px;width:7px;height:4px" viewBox="0 0 7 4"><path d="M0 4h7l-3.500-4z" fill="#000"/></svg>
<span class="t" style="right:1396px;top:114px;">0.10</span>
<span class="t" style="left:420px;top:151px;color:#fff;font-weight:bold;font-size:11.5px;letter-spacing:0.7px">120</span>
<span class="t" style="left:444px;top:132px;color:#fff;font-size:32px;line-height:34px;height:34px;letter-spacing:-1.1px">02</span>
<span class="t" style="left:514px;top:151px;color:#fff;font-weight:bold;font-size:11.5px;letter-spacing:0.7px">120</span>
<span class="t" style="left:539px;top:132px;color:#fff;font-size:32px;line-height:34px;height:34px;letter-spacing:-0.8px">04</span>
<span class="t" style="left:409px;top:553px;color:#505050;letter-spacing:-0.6px">GBPTRY,H1</span>
<span class="t" style="left:487px;top:553px;color:#505050;letter-spacing:-0.6px">USDTRY,H1</span>
<span class="t" style="left:567px;top:553px;color:#505050;letter-spacing:-0.6px">EURTRY,H1</span>
<span class="t" style="left:647px;top:553px;color:#505050;letter-spacing:-0.6px">GBPZAR,H1</span>
<span class="t" style="left:726px;top:553px;color:#505050;letter-spacing:-0.6px">USDZAR,H1</span>
<span class="t" style="left:806px;top:553px;color:#505050;letter-spacing:-0.6px">EURZAR,H1</span>
<span class="t" style="left:887px;top:553px;color:#505050;letter-spacing:-0.6px">GBPNZD,H1</span>
<span class="t" style="left:966px;top:553px;color:#505050;letter-spacing:-0.6px">EURNZD,H1</span>
<span class="t" style="left:1046px;top:553px;color:#505050;letter-spacing:-0.6px">AUDNZD,H1</span>
<span class="t" style="left:1126px;top:553px;color:#505050;letter-spacing:-0.6px">GBPMXN,H1</span>
<span class="t" style="left:1206px;top:553px;color:#505050;letter-spacing:-0.6px">USDMXN,H1</span>
<span class="t" style="left:1286px;top:553px;color:#505050;letter-spacing:-0.6px">EURMXN,H1</span>
<span class="t" style="left:1366px;top:553px;color:#505050;letter-spacing:-0.6px">GBPAUD,H1</span>
<span class="t" style="left:1446px;top:553px;color:#505050;letter-spacing:-0.6px">EURAUD,H1</span>
<div style="left:476px;top:553px;width:1px;height:12px;background:#404040"></div>
<div style="left:556px;top:553px;width:1px;height:12px;background:#404040"></div>
<div style="left:636px;top:553px;width:1px;height:12px;background:#404040"></div>
<div style="left:716px;top:553px;width:1px;height:12px;background:#404040"></div>
<div style="left:796px;top:553px;width:1px;height:12px;background:#404040"></div>
<div style="left:876px;top:553px;width:1px;height:12px;background:#404040"></div>
<div style="left:956px;top:553px;width:1px;height:12px;background:#404040"></div>
<div style="left:1036px;top:553px;width:1px;height:12px;background:#404040"></div>
<div style="left:1116px;top:553px;width:1px;height:12px;background:#404040"></div>
<div style="left:1196px;top:553px;width:1px;height:12px;background:#404040"></div>
<div style="left:1276px;top:553px;width:1px;height:12px;background:#404040"></div>
<div style="left:1356px;top:553px;width:1px;height:12px;background:#404040"></div>
<div style="left:1436px;top:553px;width:1px;height:12px;background:#404040"></div>
<div style="left:1515px;top:551px;width:1px;height:17px;background:#fff"></div>
<div style="left:1516px;top:549px;width:72px;height:20px;background:#fff;border:1px solid #000;border-top:0"></div>
<span class="t" style="left:1527px;top:553px;">#AAPL,H4</span>
<span class="t" style="left:1598px;top:553px;color:#505050;letter-spacing:-0.6px">NZDUSD,H1</span>
<span class="t" style="left:1678px;top:553px;color:#505050;letter-spacing:-0.6px">NZDCHF,H1</span>
<span class="t" style="left:1758px;top:553px;color:#505050;letter-spacing:-0.6px">NZDJPY,H1</span>
<span class="t" style="left:1834px;top:553px;width:50px;overflow:hidden;color:#505050;letter-spacing:-0.6px">NZDSGD,H1</span>
<div style="left:1668px;top:553px;width:1px;height:12px;background:#404040"></div>
<div style="left:1748px;top:553px;width:1px;height:12px;background:#404040"></div>
<div style="left:1824px;top:553px;width:1px;height:12px;background:#404040"></div>
<svg style="left:1892px;top:556px;width:4px;height:7px" viewBox="0 0 4 7"><path d="M4 0v7l-4-3.500z" fill="#A0A0A0"/></svg>
<svg style="left:1908px;top:556px;width:4px;height:7px" viewBox="0 0 4 7"><path d="M0 0v7l4-3.500z" fill="#000"/></svg>
<div style="left:398px;top:570px;width:1522px;height:1px;background:#fff"></div>
<div style="left:0px;top:571px;width:1920px;height:1px;background:#fff"></div>
<svg style="left:4px;top:577px;width:6px;height:5px" viewBox="0 0 6 5"><path d="M0.500 0l5 5M5.500 0l-5 5" stroke="#000" stroke-width="1.500"/></svg>
<div style="left:1px;top:588px;width:13px;height:468px;background:linear-gradient(#A6CAF0,#0A246A)"></div>
<span class="t" style="left:1px;top:1053px;transform-origin:0 0;transform:rotate(-90deg);color:#fff;width:44px;height:13px;letter-spacing:0.1px">Terminál</span>
<div style="left:15px;top:574px;width:1902px;height:460px;background:#fff;border:1px solid;border-color:#808080 #fff #fff #808080"></div>
<div class="hd" style="left:16px;top:575px;width:143px;height:17px;"></div>
<span class="t" style="left:21px;top:578px;letter-spacing:-0.4px">Megbízás</span>
<div class="hd" style="left:159px;top:575px;width:200px;height:17px;"></div>
<span class="t" style="right:1566px;top:578px;">Időpont</span>
<div class="hd" style="left:359px;top:575px;width:99px;height:17px;"></div>
<span class="t" style="right:1467px;top:578px;">Típus</span>
<div class="hd" style="left:458px;top:575px;width:78px;height:17px;"></div>
<span class="t" style="right:1389px;top:578px;">Kötésegység</span>
<div class="hd" style="left:536px;top:575px;width:100px;height:17px;"></div>
<span class="t" style="right:1289px;top:578px;">Instrumentum</span>
<div class="hd" style="left:636px;top:575px;width:111px;height:17px;"></div>
<span class="t" style="right:1178px;top:578px;">Ár</span>
<div class="hd" style="left:747px;top:575px;width:111px;height:17px;"></div>
<span class="t" style="right:1067px;top:578px;">S / L</span>
<div class="hd" style="left:858px;top:575px;width:111px;height:17px;"></div>
<span class="t" style="right:956px;top:578px;">T / P</span>
<div class="hd" style="left:969px;top:575px;width:111px;height:17px;"></div>
<span class="t" style="right:845px;top:578px;">Ár</span>
<div class="hd" style="left:1080px;top:575px;width:111px;height:17px;"></div>
<span class="t" style="right:734px;top:578px;">Jutalék</span>
<div class="hd" style="left:1191px;top:575px;width:111px;height:17px;"></div>
<span class="t" style="right:623px;top:578px;">Adók</span>
<div class="hd" style="left:1302px;top:575px;width:111px;height:17px;"></div>
<span class="t" style="left:1357px;top:578px;">Kamat</span>
<div class="hd" style="left:1413px;top:575px;width:166px;height:17px;"></div>
<span class="t" style="right:346px;top:578px;">Profit</span>
<div class="hd" style="left:1579px;top:575px;width:337px;height:17px;"></div>
<span class="t" style="right:11px;top:578px;">Megjegyzés</span>
<svg style="left:1399px;top:580px;width:9px;height:7px" viewBox="0 0 9 7"><path d="M0.500 6.500h8l-4-6z" fill="#fff" stroke="#A0A0A0" stroke-width=".8"/></svg>
<div style="left:16px;top:593px;width:1900px;height:20px;background:#fff;border-bottom:1px solid #D0D0D0"></div>
<svg style="left:19px;top:595px;width:16px;height:17px" viewBox="0 0 16 17"><path d="M2 2h7l4 3.500v10h-11z" fill="#B0B0B0" opacity=".5"/><path d="M1 0.500h6.500l3.500 3.500v10.500h-10.500z" fill="#FAFAFA" stroke="#505050" stroke-width=".9"/><path d="M7.500 0.500v3.500h3.500" fill="#E0E0E0" stroke="#505050" stroke-width=".8"/><circle cx="10.500" cy="11.500" r="3.400" fill="#F05020" stroke="#A02808" stroke-width=".7"/><circle cx="9.700" cy="10.500" r="1.200" fill="#fff" opacity=".45"/></svg>
<span class="t" style="left:37px;top:596px;">54765126</span>
<span class="t" style="right:1564px;top:596px;">2015.01.30 18:35:40</span>
<span class="t" style="right:1464px;top:596px;">sell</span>
<span class="t" style="right:1387px;top:596px;">0.10</span>
<span class="t" style="right:1287px;top:596px;">audnzd</span>
<span class="t" style="right:1176px;top:596px;">1.07134</span>
<span class="t" style="right:1065px;top:596px;">0.00000</span>
<span class="t" style="right:954px;top:596px;">0.00000</span>
<span class="t" style="right:843px;top:596px;">1.05977</span>
<span class="t" style="right:732px;top:596px;">0.00</span>
<span class="t" style="right:621px;top:596px;">0.00</span>
<span class="t" style="right:510px;top:596px;">58.57</span>
<span class="t" style="right:364px;top:596px;">23 036.45</span>
<svg style="left:1565px;top:599px;width:8px;height:8px" viewBox="0 0 8 8"><path d="M0.800 0.800l6.400 6.400M7.200 0.800l-6.400 6.400" stroke="#747474" stroke-width="2.100"/></svg>
<div style="left:16px;top:613px;width:1900px;height:20px;background:#ECECEC;border-bottom:1px solid #D0D0D0"></div>
<svg style="left:19px;top:615px;width:16px;height:17px" viewBox="0 0 16 17"><path d="M2 2h7l4 3.500v10h-11z" fill="#B0B0B0" opacity=".5"/><path d="M1 0.500h6.500l3.500 3.500v10.500h-10.500z" fill="#FAFAFA" stroke="#505050" stroke-width=".9"/><path d="M7.500 0.500v3.500h3.500" fill="#E0E0E0" stroke="#505050" stroke-width=".8"/><circle cx="10.500" cy="11.500" r="3.400" fill="#2C8CF0" stroke="#1050A0" stroke-width=".7"/><circle cx="9.700" cy="10.500" r="1.200" fill="#fff" opacity=".45"/></svg>
<span class="t" style="left:37px;top:616px;">54765378</span>
<span class="t" style="right:1564px;top:616px;">2015.01.30 18:37:19</span>
<span class="t" style="right:1464px;top:616px;">buy</span>
<span class="t" style="right:1387px;top:616px;">0.10</span>
<span class="t" style="right:1287px;top:616px;">nzdcad</span>
<span class="t" style="right:1176px;top:616px;">0.92103</span>
<span class="t" style="right:1065px;top:616px;">0.00000</span>
<span class="t" style="right:954px;top:616px;">0.00000</span>
<span class="t" style="right:843px;top:616px;">0.92210</span>
<span class="t" style="right:732px;top:616px;">0.00</span>
<span class="t" style="right:621px;top:616px;">0.00</span>
<span class="t" style="right:510px;top:616px;">362.95</span>
<span class="t" style="right:364px;top:616px;">2 306.58</span>
<svg style="left:1565px;top:619px;width:8px;height:8px" viewBox="0 0 8 8"><path d="M0.800 0.800l6.400 6.400M7.200 0.800l-6.400 6.400" stroke="#747474" stroke-width="2.100"/></svg>
<div style="left:16px;top:633px;width:1900px;height:20px;background:#fff;border-bottom:1px solid #D0D0D0"></div>
<svg style="left:19px;top:635px;width:16px;height:17px" viewBox="0 0 16 17"><path d="M2 2h7l4 3.500v10h-11z" fill="#B0B0B0" opacity=".5"/><path d="M1 0.500h6.500l3.500 3.500v10.500h-10.500z" fill="#FAFAFA" stroke="#505050" stroke-width=".9"/><path d="M7.500 0.500v3.500h3.500" fill="#E0E0E0" stroke="#505050" stroke-width=".8"/><circle cx="10.500" cy="11.500" r="3.400" fill="#F05020" stroke="#A02808" stroke-width=".7"/><circle cx="9.700" cy="10.500" r="1.200" fill="#fff" opacity=".45"/></svg>
<span class="t" style="left:37px;top:636px;">54765423</span>
<span class="t" style="right:1564px;top:636px;">2015.01.30 18:37:28</span>
<span class="t" style="right:1464px;top:636px;">sell</span>
<span class="t" style="right:1387px;top:636px;">0.10</span>
<span class="t" style="right:1287px;top:636px;">usdmxn</span>
<span class="t" style="right:1176px;top:636px;">14.99932</span>
<span class="t" style="right:1065px;top:636px;">0.00000</span>
<span class="t" style="right:954px;top:636px;">0.00000</span>
<span class="t" style="right:843px;top:636px;">14.89835</span>
<span class="t" style="right:732px;top:636px;">0.00</span>
<span class="t" style="right:621px;top:636px;">0.00</span>
<span class="t" style="right:510px;top:636px;">426.44</span>
<span class="t" style="right:364px;top:636px;">18 309.18</span>
<svg style="left:1565px;top:639px;width:8px;height:8px" viewBox="0 0 8 8"><path d="M0.800 0.800l6.400 6.400M7.200 0.800l-6.400 6.400" stroke="#747474" stroke-width="2.100"/></svg>
<div style="left:16px;top:653px;width:1900px;height:20px;background:#ECECEC;border-bottom:1px solid #D0D0D0"></div>
<svg style="left:19px;top:655px;width:16px;height:17px" viewBox="0 0 16 17"><path d="M2 2h7l4 3.500v10h-11z" fill="#B0B0B0" opacity=".5"/><path d="M1 0.500h6.500l3.500 3.500v10.500h-10.500z" fill="#FAFAFA" stroke="#505050" stroke-width=".9"/><path d="M7.500 0.500v3.500h3.500" fill="#E0E0E0" stroke="#505050" stroke-width=".8"/><circle cx="10.500" cy="11.500" r="3.400" fill="#2C8CF0" stroke="#1050A0" stroke-width=".7"/><circle cx="9.700" cy="10.500" r="1.200" fill="#fff" opacity=".45"/></svg>
<span class="t" style="left:37px;top:656px;">54766826</span>
<span class="t" style="right:1564px;top:656px;">2015.01.30 18:57:37</span>
<span class="t" style="right:1464px;top:656px;">buy</span>
<span class="t" style="right:1387px;top:656px;">0.10</span>
<span class="t" style="right:1287px;top:656px;">audusd</span>
<span class="t" style="right:1176px;top:656px;">0.77615</span>
<span class="t" style="right:1065px;top:656px;">0.00000</span>
<span class="t" style="right:954px;top:656px;">0.00000</span>
<span class="t" style="right:843px;top:656px;">0.78075</span>
<span class="t" style="right:732px;top:656px;">0.00</span>
<span class="t" style="right:621px;top:656px;">0.00</span>
<span class="t" style="right:510px;top:656px;">432.75</span>
<span class="t" style="right:364px;top:656px;">12 409.24</span>
<svg style="left:1565px;top:659px;width:8px;height:8px" viewBox="0 0 8 8"><path d="M0.800 0.800l6.400 6.400M7.200 0.800l-6.400 6.400" stroke="#747474" stroke-width="2.100"/></svg>
<div style="left:16px;top:673px;width:1900px;height:20px;background:#fff;border-bottom:1px solid #D0D0D0"></div>
<svg style="left:19px;top:675px;width:16px;height:17px" viewBox="0 0 16 17"><path d="M2 2h7l4 3.500v10h-11z" fill="#B0B0B0" opacity=".5"/><path d="M1 0.500h6.500l3.500 3.500v10.500h-10.500z" fill="#FAFAFA" stroke="#505050" stroke-width=".9"/><path d="M7.500 0.500v3.500h3.500" fill="#E0E0E0" stroke="#505050" stroke-width=".8"/><circle cx="10.500" cy="11.500" r="3.400" fill="#2C8CF0" stroke="#1050A0" stroke-width=".7"/><circle cx="9.700" cy="10.500" r="1.200" fill="#fff" opacity=".45"/></svg>
<span class="t" style="left:37px;top:676px;">54766837</span>
<span class="t" style="right:1564px;top:676px;">2015.01.30 18:57:52</span>
<span class="t" style="right:1464px;top:676px;">buy</span>
<span class="t" style="right:1387px;top:676px;">0.10</span>
<span class="t" style="right:1287px;top:676px;">audjpy</span>
<span class="t" style="right:1176px;top:676px;">91.164</span>
<span class="t" style="right:1065px;top:676px;">0.000</span>
<span class="t" style="right:954px;top:676px;">0.000</span>
<span class="t" style="right:843px;top:676px;">92.972</span>
<span class="t" style="right:732px;top:676px;">0.00</span>
<span class="t" style="right:621px;top:676px;">0.00</span>
<span class="t" style="right:510px;top:676px;">446.18</span>
<span class="t" style="right:364px;top:676px;">40 962.57</span>
<svg style="left:1565px;top:679px;width:8px;height:8px" viewBox="0 0 8 8"><path d="M0.800 0.800l6.400 6.400M7.200 0.800l-6.400 6.400" stroke="#747474" stroke-width="2.100"/></svg>
<div style="left:16px;top:693px;width:1900px;height:20px;background:#ECECEC;border-bottom:1px solid #D0D0D0"></div>
<svg style="left:19px;top:695px;width:16px;height:17px" viewBox="0 0 16 17"><path d="M2 2h7l4 3.500v10h-11z" fill="#B0B0B0" opacity=".5"/><path d="M1 0.500h6.500l3.500 3.500v10.500h-10.500z" fill="#FAFAFA" stroke="#505050" stroke-width=".9"/><path d="M7.500 0.500v3.500h3.500" fill="#E0E0E0" stroke="#505050" stroke-width=".8"/><circle cx="10.500" cy="11.500" r="3.400" fill="#F05020" stroke="#A02808" stroke-width=".7"/><circle cx="9.700" cy="10.500" r="1.200" fill="#fff" opacity=".45"/></svg>
<span class="t" style="left:37px;top:696px;">54765408</span>
<span class="t" style="right:1564px;top:696px;">2015.01.30 18:37:25</span>
<span class="t" style="right:1464px;top:696px;">sell</span>
<span class="t" style="right:1387px;top:696px;">0.10</span>
<span class="t" style="right:1287px;top:696px;">gbpmxn</span>
<span class="t" style="right:1176px;top:696px;">22.54327</span>
<span class="t" style="right:1065px;top:696px;">0.00000</span>
<span class="t" style="right:954px;top:696px;">0.00000</span>
<span class="t" style="right:843px;top:696px;">22.71790</span>
<span class="t" style="right:732px;top:696px;">0.00</span>
<span class="t" style="right:621px;top:696px;">0.00</span>
<span class="t" style="right:510px;top:696px;">494.96</span>
<span class="t" style="right:364px;top:696px;">-31 662.75</span>
<svg style="left:1565px;top:699px;width:8px;height:8px" viewBox="0 0 8 8"><path d="M0.800 0.800l6.400 6.400M7.200 0.800l-6.400 6.400" stroke="#747474" stroke-width="2.100"/></svg>
<div style="left:16px;top:713px;width:1900px;height:20px;background:#fff;border-bottom:1px solid #D0D0D0"></div>
<svg style="left:19px;top:715px;width:16px;height:17px" viewBox="0 0 16 17"><path d="M2 2h7l4 3.500v10h-11z" fill="#B0B0B0" opacity=".5"/><path d="M1 0.500h6.500l3.500 3.500v10.500h-10.500z" fill="#FAFAFA" stroke="#505050" stroke-width=".9"/><path d="M7.500 0.500v3.500h3.500" fill="#E0E0E0" stroke="#505050" stroke-width=".8"/><circle cx="10.500" cy="11.500" r="3.400" fill="#F05020" stroke="#A02808" stroke-width=".7"/><circle cx="9.700" cy="10.500" r="1.200" fill="#fff" opacity=".45"/></svg>
<span class="t" style="left:37px;top:716px;">54766835</span>
<span class="t" style="right:1564px;top:716px;">2015.01.30 18:57:46</span>
<span class="t" style="right:1464px;top:716px;">sell</span>
<span class="t" style="right:1387px;top:716px;">0.10</span>
<span class="t" style="right:1287px;top:716px;">euraud</span>
<span class="t" style="right:1176px;top:716px;">1.45488</span>
<span class="t" style="right:1065px;top:716px;">0.00000</span>
<span class="t" style="right:954px;top:716px;">0.00000</span>
<span class="t" style="right:843px;top:716px;">1.45133</span>
<span class="t" style="right:732px;top:716px;">0.00</span>
<span class="t" style="right:621px;top:716px;">0.00</span>
<span class="t" style="right:510px;top:716px;">619.86</span>
<span class="t" style="right:364px;top:716px;">7 489.25</span>
<svg style="left:1565px;top:719px;width:8px;height:8px" viewBox="0 0 8 8"><path d="M0.800 0.800l6.400 6.400M7.200 0.800l-6.400 6.400" stroke="#747474" stroke-width="2.100"/></svg>
<div style="left:16px;top:733px;width:1900px;height:20px;background:#ECECEC;border-bottom:1px solid #D0D0D0"></div>
<svg style="left:19px;top:735px;width:16px;height:17px" viewBox="0 0 16 17"><path d="M2 2h7l4 3.500v10h-11z" fill="#B0B0B0" opacity=".5"/><path d="M1 0.500h6.500l3.500 3.500v10.500h-10.500z" fill="#FAFAFA" stroke="#505050" stroke-width=".9"/><path d="M7.500 0.500v3.500h3.500" fill="#E0E0E0" stroke="#505050" stroke-width=".8"/><circle cx="10.500" cy="11.500" r="3.400" fill="#2C8CF0" stroke="#1050A0" stroke-width=".7"/><circle cx="9.700" cy="10.500" r="1.200" fill="#fff" opacity=".45"/></svg>
<span class="t" style="left:37px;top:736px;">54765036</span>
<span class="t" style="right:1564px;top:736px;">2015.01.30 18:34:14</span>
<span class="t" style="right:1464px;top:736px;">buy</span>
<span class="t" style="right:1387px;top:736px;">0.10</span>
<span class="t" style="right:1287px;top:736px;">nzdjpy</span>
<span class="t" style="right:1176px;top:736px;">85.136</span>
<span class="t" style="right:1065px;top:736px;">0.000</span>
<span class="t" style="right:954px;top:736px;">0.000</span>
<span class="t" style="right:843px;top:736px;">87.742</span>
<span class="t" style="right:732px;top:736px;">0.00</span>
<span class="t" style="right:621px;top:736px;">0.00</span>
<span class="t" style="right:510px;top:736px;">649.87</span>
<span class="t" style="right:364px;top:736px;">59 041.79</span>
<svg style="left:1565px;top:739px;width:8px;height:8px" viewBox="0 0 8 8"><path d="M0.800 0.800l6.400 6.400M7.200 0.800l-6.400 6.400" stroke="#747474" stroke-width="2.100"/></svg>
<div style="left:16px;top:753px;width:1900px;height:20px;background:#fff;border-bottom:1px solid #D0D0D0"></div>
<svg style="left:19px;top:755px;width:16px;height:17px" viewBox="0 0 16 17"><path d="M2 2h7l4 3.500v10h-11z" fill="#B0B0B0" opacity=".5"/><path d="M1 0.500h6.500l3.500 3.500v10.500h-10.500z" fill="#FAFAFA" stroke="#505050" stroke-width=".9"/><path d="M7.500 0.500v3.500h3.500" fill="#E0E0E0" stroke="#505050" stroke-width=".8"/><circle cx="10.500" cy="11.500" r="3.400" fill="#F05020" stroke="#A02808" stroke-width=".7"/><circle cx="9.700" cy="10.500" r="1.200" fill="#fff" opacity=".45"/></svg>
<span class="t" style="left:37px;top:756px;">54765435</span>
<span class="t" style="right:1564px;top:756px;">2015.01.30 18:37:31</span>
<span class="t" style="right:1464px;top:756px;">sell</span>
<span class="t" style="right:1387px;top:756px;">0.10</span>
<span class="t" style="right:1287px;top:756px;">eurmxn</span>
<span class="t" style="right:1176px;top:756px;">16.94027</span>
<span class="t" style="right:1065px;top:756px;">0.00000</span>
<span class="t" style="right:954px;top:756px;">0.00000</span>
<span class="t" style="right:843px;top:756px;">16.88014</span>
<span class="t" style="right:732px;top:756px;">0.00</span>
<span class="t" style="right:621px;top:756px;">0.00</span>
<span class="t" style="right:510px;top:756px;">691.81</span>
<span class="t" style="right:364px;top:756px;">10 903.55</span>
<svg style="left:1565px;top:759px;width:8px;height:8px" viewBox="0 0 8 8"><path d="M0.800 0.800l6.400 6.400M7.200 0.800l-6.400 6.400" stroke="#747474" stroke-width="2.100"/></svg>
<div style="left:16px;top:773px;width:1900px;height:20px;background:#ECECEC;border-bottom:1px solid #D0D0D0"></div>
<svg style="left:19px;top:775px;width:16px;height:17px" viewBox="0 0 16 17"><path d="M2 2h7l4 3.500v10h-11z" fill="#B0B0B0" opacity=".5"/><path d="M1 0.500h6.500l3.500 3.500v10.500h-10.500z" fill="#FAFAFA" stroke="#505050" stroke-width=".9"/><path d="M7.500 0.500v3.500h3.500" fill="#E0E0E0" stroke="#505050" stroke-width=".8"/><circle cx="10.500" cy="11.500" r="3.400" fill="#2C8CF0" stroke="#1050A0" stroke-width=".7"/><circle cx="9.700" cy="10.500" r="1.200" fill="#fff" opacity=".45"/></svg>
<span class="t" style="left:37px;top:776px;">54765234</span>
<span class="t" style="right:1564px;top:776px;">2015.01.30 18:36:40</span>
<span class="t" style="right:1464px;top:776px;">buy</span>
<span class="t" style="right:1387px;top:776px;">0.10</span>
<span class="t" style="right:1287px;top:776px;">nzdsgd</span>
<span class="t" style="right:1176px;top:776px;">0.98212</span>
<span class="t" style="right:1065px;top:776px;">0.00000</span>
<span class="t" style="right:954px;top:776px;">0.00000</span>
<span class="t" style="right:843px;top:776px;">0.99538</span>
<span class="t" style="right:732px;top:776px;">0.00</span>
<span class="t" style="right:621px;top:776px;">0.00</span>
<span class="t" style="right:510px;top:776px;">698.14</span>
<span class="t" style="right:364px;top:776px;">26 478.18</span>
<svg style="left:1565px;top:779px;width:8px;height:8px" viewBox="0 0 8 8"><path d="M0.800 0.800l6.400 6.400M7.200 0.800l-6.400 6.400" stroke="#747474" stroke-width="2.100"/></svg>
<div style="left:16px;top:793px;width:1900px;height:20px;background:#fff;border-bottom:1px solid #D0D0D0"></div>
<svg style="left:19px;top:795px;width:16px;height:17px" viewBox="0 0 16 17"><path d="M2 2h7l4 3.500v10h-11z" fill="#B0B0B0" opacity=".5"/><path d="M1 0.500h6.500l3.500 3.500v10.500h-10.500z" fill="#FAFAFA" stroke="#505050" stroke-width=".9"/><path d="M7.500 0.500v3.500h3.500" fill="#E0E0E0" stroke="#505050" stroke-width=".8"/><circle cx="10.500" cy="11.500" r="3.400" fill="#F05020" stroke="#A02808" stroke-width=".7"/><circle cx="9.700" cy="10.500" r="1.200" fill="#fff" opacity=".45"/></svg>
<span class="t" style="left:37px;top:796px;">54766820</span>
<span class="t" style="right:1564px;top:796px;">2015.01.30 18:57:31</span>
<span class="t" style="right:1464px;top:796px;">sell</span>
<span class="t" style="right:1387px;top:796px;">0.10</span>
<span class="t" style="right:1287px;top:796px;">gbpaud</span>
<span class="t" style="right:1176px;top:796px;">1.93599</span>
<span class="t" style="right:1065px;top:796px;">0.00000</span>
<span class="t" style="right:954px;top:796px;">0.00000</span>
<span class="t" style="right:843px;top:796px;">1.95314</span>
<span class="t" style="right:732px;top:796px;">0.00</span>
<span class="t" style="right:621px;top:796px;">0.00</span>
<span class="t" style="right:510px;top:796px;">708.41</span>
<span class="t" style="right:364px;top:796px;">-36 180.46</span>
<svg style="left:1565px;top:799px;width:8px;height:8px" viewBox="0 0 8 8"><path d="M0.800 0.800l6.400 6.400M7.200 0.800l-6.400 6.400" stroke="#747474" stroke-width="2.100"/></svg>
<div style="left:16px;top:813px;width:1900px;height:20px;background:#ECECEC;border-bottom:1px solid #D0D0D0"></div>
<svg style="left:19px;top:815px;width:16px;height:17px" viewBox="0 0 16 17"><path d="M2 2h7l4 3.500v10h-11z" fill="#B0B0B0" opacity=".5"/><path d="M1 0.500h6.500l3.500 3.500v10.500h-10.500z" fill="#FAFAFA" stroke="#505050" stroke-width=".9"/><path d="M7.500 0.500v3.500h3.500" fill="#E0E0E0" stroke="#505050" stroke-width=".8"/><circle cx="10.500" cy="11.500" r="3.400" fill="#2C8CF0" stroke="#1050A0" stroke-width=".7"/><circle cx="9.700" cy="10.500" r="1.200" fill="#fff" opacity=".45"/></svg>
<span class="t" style="left:37px;top:816px;">54765007</span>
<span class="t" style="right:1564px;top:816px;">2015.01.30 18:33:56</span>
<span class="t" style="right:1464px;top:816px;">buy</span>
<span class="t" style="right:1387px;top:816px;">0.10</span>
<span class="t" style="right:1287px;top:816px;">nzdusd</span>
<span class="t" style="right:1176px;top:816px;">0.72497</span>
<span class="t" style="right:1065px;top:816px;">0.00000</span>
<span class="t" style="right:954px;top:816px;">0.00000</span>
<span class="t" style="right:843px;top:816px;">0.73686</span>
<span class="t" style="right:732px;top:816px;">0.00</span>
<span class="t" style="right:621px;top:816px;">0.00</span>
<span class="t" style="right:510px;top:816px;">865.51</span>
<span class="t" style="right:364px;top:816px;">32 077.08</span>
<svg style="left:1565px;top:819px;width:8px;height:8px" viewBox="0 0 8 8"><path d="M0.800 0.800l6.400 6.400M7.200 0.800l-6.400 6.400" stroke="#747474" stroke-width="2.100"/></svg>
<div style="left:16px;top:833px;width:1900px;height:20px;background:#fff;border-bottom:1px solid #D0D0D0"></div>
<svg style="left:19px;top:835px;width:16px;height:17px" viewBox="0 0 16 17"><path d="M2 2h7l4 3.500v10h-11z" fill="#B0B0B0" opacity=".5"/><path d="M1 0.500h6.500l3.500 3.500v10.500h-10.500z" fill="#FAFAFA" stroke="#505050" stroke-width=".9"/><path d="M7.500 0.500v3.500h3.500" fill="#E0E0E0" stroke="#505050" stroke-width=".8"/><circle cx="10.500" cy="11.500" r="3.400" fill="#2C8CF0" stroke="#1050A0" stroke-width=".7"/><circle cx="9.700" cy="10.500" r="1.200" fill="#fff" opacity=".45"/></svg>
<span class="t" style="left:37px;top:836px;">54765027</span>
<span class="t" style="right:1564px;top:836px;">2015.01.30 18:34:10</span>
<span class="t" style="right:1464px;top:836px;">buy</span>
<span class="t" style="right:1387px;top:836px;">0.10</span>
<span class="t" style="right:1287px;top:836px;">nzdchf</span>
<span class="t" style="right:1176px;top:836px;">0.66863</span>
<span class="t" style="right:1065px;top:836px;">0.00000</span>
<span class="t" style="right:954px;top:836px;">0.00000</span>
<span class="t" style="right:843px;top:836px;">0.68246</span>
<span class="t" style="right:732px;top:836px;">0.00</span>
<span class="t" style="right:621px;top:836px;">0.00</span>
<span class="t" style="right:510px;top:836px;">953.03</span>
<span class="t" style="right:364px;top:836px;">40 280.53</span>
<svg style="left:1565px;top:839px;width:8px;height:8px" viewBox="0 0 8 8"><path d="M0.800 0.800l6.400 6.400M7.200 0.800l-6.400 6.400" stroke="#747474" stroke-width="2.100"/></svg>
<div style="left:16px;top:853px;width:1900px;height:20px;background:#ECECEC;border-bottom:1px solid #D0D0D0"></div>
<svg style="left:19px;top:855px;width:16px;height:17px" viewBox="0 0 16 17"><path d="M2 2h7l4 3.500v10h-11z" fill="#B0B0B0" opacity=".5"/><path d="M1 0.500h6.500l3.500 3.500v10.500h-10.500z" fill="#FAFAFA" stroke="#505050" stroke-width=".9"/><path d="M7.500 0.500v3.500h3.500" fill="#E0E0E0" stroke="#505050" stroke-width=".8"/><circle cx="10.500" cy="11.500" r="3.400" fill="#F05020" stroke="#A02808" stroke-width=".7"/><circle cx="9.700" cy="10.500" r="1.200" fill="#fff" opacity=".45"/></svg>
<span class="t" style="left:37px;top:856px;">54765021</span>
<span class="t" style="right:1564px;top:856px;">2015.01.30 18:34:02</span>
<span class="t" style="right:1464px;top:856px;">sell</span>
<span class="t" style="right:1387px;top:856px;">0.10</span>
<span class="t" style="right:1287px;top:856px;">eurnzd</span>
<span class="t" style="right:1176px;top:856px;">1.55690</span>
<span class="t" style="right:1065px;top:856px;">0.00000</span>
<span class="t" style="right:954px;top:856px;">0.00000</span>
<span class="t" style="right:843px;top:856px;">1.53771</span>
<span class="t" style="right:732px;top:856px;">0.00</span>
<span class="t" style="right:621px;top:856px;">0.00</span>
<span class="t" style="right:510px;top:856px;">1 020.57</span>
<span class="t" style="right:364px;top:856px;">38 208.25</span>
<svg style="left:1565px;top:859px;width:8px;height:8px" viewBox="0 0 8 8"><path d="M0.800 0.800l6.400 6.400M7.200 0.800l-6.400 6.400" stroke="#747474" stroke-width="2.100"/></svg>
<div style="left:16px;top:873px;width:1900px;height:20px;background:#fff;border-bottom:1px solid #D0D0D0"></div>
<svg style="left:19px;top:875px;width:16px;height:17px" viewBox="0 0 16 17"><path d="M2 2h7l4 3.500v10h-11z" fill="#B0B0B0" opacity=".5"/><path d="M1 0.500h6.500l3.500 3.500v10.500h-10.500z" fill="#FAFAFA" stroke="#505050" stroke-width=".9"/><path d="M7.500 0.500v3.500h3.500" fill="#E0E0E0" stroke="#505050" stroke-width=".8"/><circle cx="10.500" cy="11.500" r="3.400" fill="#F05020" stroke="#A02808" stroke-width=".7"/><circle cx="9.700" cy="10.500" r="1.200" fill="#fff" opacity=".45"/></svg>
<span class="t" style="left:37px;top:876px;">54764275</span>
<span class="t" style="right:1564px;top:876px;">2015.01.30 18:21:43</span>
<span class="t" style="right:1464px;top:876px;">sell</span>
<span class="t" style="right:1387px;top:876px;">0.10</span>
<span class="t" style="right:1287px;top:876px;">usdzar</span>
<span class="t" style="right:1176px;top:876px;">11.64236</span>
<span class="t" style="right:1065px;top:876px;">0.00000</span>
<span class="t" style="right:954px;top:876px;">0.00000</span>
<span class="t" style="right:843px;top:876px;">11.50588</span>
<span class="t" style="right:732px;top:876px;">0.00</span>
<span class="t" style="right:621px;top:876px;">0.00</span>
<span class="t" style="right:510px;top:876px;">1 085.70</span>
<span class="t" style="right:364px;top:876px;">32 041.82</span>
<svg style="left:1565px;top:879px;width:8px;height:8px" viewBox="0 0 8 8"><path d="M0.800 0.800l6.400 6.400M7.200 0.800l-6.400 6.400" stroke="#747474" stroke-width="2.100"/></svg>
<div style="left:16px;top:893px;width:1900px;height:20px;background:#ECECEC;border-bottom:1px solid #D0D0D0"></div>
<svg style="left:19px;top:895px;width:16px;height:17px" viewBox="0 0 16 17"><path d="M2 2h7l4 3.500v10h-11z" fill="#B0B0B0" opacity=".5"/><path d="M1 0.500h6.500l3.500 3.500v10.500h-10.500z" fill="#FAFAFA" stroke="#505050" stroke-width=".9"/><path d="M7.500 0.500v3.500h3.500" fill="#E0E0E0" stroke="#505050" stroke-width=".8"/><circle cx="10.500" cy="11.500" r="3.400" fill="#F05020" stroke="#A02808" stroke-width=".7"/><circle cx="9.700" cy="10.500" r="1.200" fill="#fff" opacity=".45"/></svg>
<span class="t" style="left:37px;top:896px;">54765005</span>
<span class="t" style="right:1564px;top:896px;">2015.01.30 18:33:49</span>
<span class="t" style="right:1464px;top:896px;">sell</span>
<span class="t" style="right:1387px;top:896px;">0.10</span>
<span class="t" style="right:1287px;top:896px;">gbpnzd</span>
<span class="t" style="right:1176px;top:896px;">2.07106</span>
<span class="t" style="right:1065px;top:896px;">0.00000</span>
<span class="t" style="right:954px;top:896px;">0.00000</span>
<span class="t" style="right:843px;top:896px;">2.06947</span>
<span class="t" style="right:732px;top:896px;">0.00</span>
<span class="t" style="right:621px;top:896px;">0.00</span>
<span class="t" style="right:510px;top:896px;">1 360.77</span>
<span class="t" style="right:364px;top:896px;">3 165.43</span>
<svg style="left:1565px;top:899px;width:8px;height:8px" viewBox="0 0 8 8"><path d="M0.800 0.800l6.400 6.400M7.200 0.800l-6.400 6.400" stroke="#747474" stroke-width="2.100"/></svg>
<div style="left:16px;top:913px;width:1900px;height:20px;background:#fff;border-bottom:1px solid #D0D0D0"></div>
<svg style="left:19px;top:915px;width:16px;height:17px" viewBox="0 0 16 17"><path d="M2 2h7l4 3.500v10h-11z" fill="#B0B0B0" opacity=".5"/><path d="M1 0.500h6.500l3.500 3.500v10.500h-10.500z" fill="#FAFAFA" stroke="#505050" stroke-width=".9"/><path d="M7.500 0.500v3.500h3.500" fill="#E0E0E0" stroke="#505050" stroke-width=".8"/><circle cx="10.500" cy="11.500" r="3.400" fill="#F05020" stroke="#A02808" stroke-width=".7"/><circle cx="9.700" cy="10.500" r="1.200" fill="#fff" opacity=".45"/></svg>
<span class="t" style="left:37px;top:916px;">54764277</span>
<span class="t" style="right:1564px;top:916px;">2015.01.30 18:21:45</span>
<span class="t" style="right:1464px;top:916px;">sell</span>
<span class="t" style="right:1387px;top:916px;">0.10</span>
<span class="t" style="right:1287px;top:916px;">eurzar</span>
<span class="t" style="right:1176px;top:916px;">13.13875</span>
<span class="t" style="right:1065px;top:916px;">0.00000</span>
<span class="t" style="right:954px;top:916px;">0.00000</span>
<span class="t" style="right:843px;top:916px;">13.03726</span>
<span class="t" style="right:732px;top:916px;">0.00</span>
<span class="t" style="right:621px;top:916px;">0.00</span>
<span class="t" style="right:510px;top:916px;">1 488.38</span>
<span class="t" style="right:364px;top:916px;">23 829.68</span>
<svg style="left:1565px;top:919px;width:8px;height:8px" viewBox="0 0 8 8"><path d="M0.800 0.800l6.400 6.400M7.200 0.800l-6.400 6.400" stroke="#747474" stroke-width="2.100"/></svg>
<div style="left:16px;top:933px;width:1900px;height:20px;background:#ECECEC;border-bottom:1px solid #D0D0D0"></div>
<svg style="left:19px;top:935px;width:16px;height:17px" viewBox="0 0 16 17"><path d="M2 2h7l4 3.500v10h-11z" fill="#B0B0B0" opacity=".5"/><path d="M1 0.500h6.500l3.500 3.500v10.500h-10.500z" fill="#FAFAFA" stroke="#505050" stroke-width=".9"/><path d="M7.500 0.500v3.500h3.500" fill="#E0E0E0" stroke="#505050" stroke-width=".8"/><circle cx="10.500" cy="11.500" r="3.400" fill="#F05020" stroke="#A02808" stroke-width=".7"/><circle cx="9.700" cy="10.500" r="1.200" fill="#fff" opacity=".45"/></svg>
<span class="t" style="left:37px;top:936px;">54762469</span>
<span class="t" style="right:1564px;top:936px;">2015.01.30 18:01:24</span>
<span class="t" style="right:1464px;top:936px;">sell</span>
<span class="t" style="right:1387px;top:936px;">0.10</span>
<span class="t" style="right:1287px;top:936px;">eurtry</span>
<span class="t" style="right:1176px;top:936px;">2.75157</span>
<span class="t" style="right:1065px;top:936px;">0.00000</span>
<span class="t" style="right:954px;top:936px;">0.00000</span>
<span class="t" style="right:843px;top:936px;">2.80058</span>
<span class="t" style="right:732px;top:936px;">0.00</span>
<span class="t" style="right:621px;top:936px;">0.00</span>
<span class="t" style="right:510px;top:936px;">1 632.56</span>
<span class="t" style="right:364px;top:936px;">-53 582.73</span>
<svg style="left:1565px;top:939px;width:8px;height:8px" viewBox="0 0 8 8"><path d="M0.800 0.800l6.400 6.400M7.200 0.800l-6.400 6.400" stroke="#747474" stroke-width="2.100"/></svg>
<div style="left:16px;top:953px;width:1900px;height:20px;background:#fff;border-bottom:1px solid #D0D0D0"></div>
<svg style="left:19px;top:955px;width:16px;height:17px" viewBox="0 0 16 17"><path d="M2 2h7l4 3.500v10h-11z" fill="#B0B0B0" opacity=".5"/><path d="M1 0.500h6.500l3.500 3.500v10.500h-10.500z" fill="#FAFAFA" stroke="#505050" stroke-width=".9"/><path d="M7.500 0.500v3.500h3.500" fill="#E0E0E0" stroke="#505050" stroke-width=".8"/><circle cx="10.500" cy="11.500" r="3.400" fill="#F05020" stroke="#A02808" stroke-width=".7"/><circle cx="9.700" cy="10.500" r="1.200" fill="#fff" opacity=".45"/></svg>
<span class="t" style="left:37px;top:956px;">54762451</span>
<span class="t" style="right:1564px;top:956px;">2015.01.30 18:01:18</span>
<span class="t" style="right:1464px;top:956px;">sell</span>
<span class="t" style="right:1387px;top:956px;">0.10</span>
<span class="t" style="right:1287px;top:956px;">gbptry</span>
<span class="t" style="right:1176px;top:956px;">3.65722</span>
<span class="t" style="right:1065px;top:956px;">0.00000</span>
<span class="t" style="right:954px;top:956px;">0.00000</span>
<span class="t" style="right:843px;top:956px;">3.76943</span>
<span class="t" style="right:732px;top:956px;">0.00</span>
<span class="t" style="right:621px;top:956px;">0.00</span>
<span class="t" style="right:510px;top:956px;">1 795.80</span>
<span class="t" style="right:364px;top:956px;">-122 679.41</span>
<svg style="left:1565px;top:959px;width:8px;height:8px" viewBox="0 0 8 8"><path d="M0.800 0.800l6.400 6.400M7.200 0.800l-6.400 6.400" stroke="#747474" stroke-width="2.100"/></svg>
<div style="left:16px;top:973px;width:1900px;height:20px;background:#ECECEC;border-bottom:1px solid #D0D0D0"></div>
<svg style="left:19px;top:975px;width:16px;height:17px" viewBox="0 0 16 17"><path d="M2 2h7l4 3.500v10h-11z" fill="#B0B0B0" opacity=".5"/><path d="M1 0.500h6.500l3.500 3.500v10.500h-10.500z" fill="#FAFAFA" stroke="#505050" stroke-width=".9"/><path d="M7.500 0.500v3.500h3.500" fill="#E0E0E0" stroke="#505050" stroke-width=".8"/><circle cx="10.500" cy="11.500" r="3.400" fill="#F05020" stroke="#A02808" stroke-width=".7"/><circle cx="9.700" cy="10.500" r="1.200" fill="#fff" opacity=".45"/></svg>
<span class="t" style="left:37px;top:976px;">54764270</span>
<span class="t" style="right:1564px;top:976px;">2015.01.30 18:21:39</span>
<span class="t" style="right:1464px;top:976px;">sell</span>
<span class="t" style="right:1387px;top:976px;">0.10</span>
<span class="t" style="right:1287px;top:976px;">gbpzar</span>
<span class="t" style="right:1176px;top:976px;">17.48287</span>
<span class="t" style="right:1065px;top:976px;">0.00000</span>
<span class="t" style="right:954px;top:976px;">0.00000</span>
<span class="t" style="right:843px;top:976px;">17.54428</span>
<span class="t" style="right:732px;top:976px;">0.00</span>
<span class="t" style="right:621px;top:976px;">0.00</span>
<span class="t" style="right:510px;top:976px;">2 123.69</span>
<span class="t" style="right:364px;top:976px;">-14 417.41</span>
<svg style="left:1565px;top:979px;width:8px;height:8px" viewBox="0 0 8 8"><path d="M0.800 0.800l6.400 6.400M7.200 0.800l-6.400 6.400" stroke="#747474" stroke-width="2.100"/></svg>
<div style="left:16px;top:993px;width:1900px;height:20px;background:#fff;border-bottom:1px solid #D0D0D0"></div>
<svg style="left:19px;top:995px;width:16px;height:17px" viewBox="0 0 16 17"><path d="M2 2h7l4 3.500v10h-11z" fill="#B0B0B0" opacity=".5"/><path d="M1 0.500h6.500l3.500 3.500v10.500h-10.500z" fill="#FAFAFA" stroke="#505050" stroke-width=".9"/><path d="M7.500 0.500v3.500h3.500" fill="#E0E0E0" stroke="#505050" stroke-width=".8"/><circle cx="10.500" cy="11.500" r="3.400" fill="#F05020" stroke="#A02808" stroke-width=".7"/><circle cx="9.700" cy="10.500" r="1.200" fill="#fff" opacity=".45"/></svg>
<span class="t" style="left:37px;top:996px;">54762456</span>
<span class="t" style="right:1564px;top:996px;">2015.01.30 18:01:22</span>
<span class="t" style="right:1464px;top:996px;">sell</span>
<span class="t" style="right:1387px;top:996px;">0.10</span>
<span class="t" style="right:1287px;top:996px;">usdtry</span>
<span class="t" style="right:1176px;top:996px;">2.43682</span>
<span class="t" style="right:1065px;top:996px;">0.00000</span>
<span class="t" style="right:954px;top:996px;">0.00000</span>
<span class="t" style="right:843px;top:996px;">2.47101</span>
<span class="t" style="right:732px;top:996px;">0.00</span>
<span class="t" style="right:621px;top:996px;">0.00</span>
<span class="t" style="right:510px;top:996px;">3 386.38</span>
<span class="t" style="right:364px;top:996px;">-37 379.99</span>
<svg style="left:1565px;top:999px;width:8px;height:8px" viewBox="0 0 8 8"><path d="M0.800 0.800l6.400 6.400M7.200 0.800l-6.400 6.400" stroke="#747474" stroke-width="2.100"/></svg>
<div style="left:16px;top:592px;width:1900px;height:1px;background:#D0D0D0"></div>
<div style="left:158px;top:592px;width:1px;height:421px;background:#D0D0D0"></div>
<div style="left:358px;top:592px;width:1px;height:421px;background:#D0D0D0"></div>
<div style="left:457px;top:592px;width:1px;height:421px;background:#D0D0D0"></div>
<div style="left:535px;top:592px;width:1px;height:421px;background:#D0D0D0"></div>
<div style="left:635px;top:592px;width:1px;height:421px;background:#D0D0D0"></div>
<div style="left:746px;top:592px;width:1px;height:421px;background:#D0D0D0"></div>
<div style="left:857px;top:592px;width:1px;height:421px;background:#D0D0D0"></div>
<div style="left:968px;top:592px;width:1px;height:421px;background:#D0D0D0"></div>
<div style="left:1079px;top:592px;width:1px;height:421px;background:#D0D0D0"></div>
<div style="left:1190px;top:592px;width:1px;height:421px;background:#D0D0D0"></div>
<div style="left:1301px;top:592px;width:1px;height:421px;background:#D0D0D0"></div>
<div style="left:1412px;top:592px;width:1px;height:421px;background:#D0D0D0"></div>
<div style="left:1578px;top:592px;width:1px;height:421px;background:#D0D0D0"></div>
<div style="left:16px;top:1013px;width:1900px;height:19px;background:#C8C8C8"></div>
<div style="left:19px;top:1015px;width:12px;height:13px;background:#F4F4F4;border:1px solid;border-color:#fff #808080 #808080 #fff"></div>
<svg style="left:21px;top:1017px;width:8px;height:8px" viewBox="0 0 8 8"><path d="M4 0.300l3.800 4h-2.100v3.200h-3.400v-3.200h-2.100z" fill="#22BB22" stroke="#087008" stroke-width=".6"/></svg>
<span class="t" style="left:37px;top:1016px;font-weight:bold;letter-spacing:0.4px">Egyenleg: 10 000 000.00 HUF</span>
<span class="t" style="left:204px;top:1016px;font-weight:bold;letter-spacing:0.65px">Saját tőke: 10 095 939.16</span>
<span class="t" style="left:354px;top:1016px;font-weight:bold;letter-spacing:0.6px">Margin: 157 681.96</span>
<span class="t" style="left:467px;top:1016px;font-weight:bold;letter-spacing:0.55px">Szabad margin: 9 938 257.20</span>
<span class="t" style="left:635px;top:1016px;font-weight:bold;letter-spacing:0.65px">Margin szint: 6402.72%</span>
<span class="t" style="right:364px;top:1016px;font-weight:bold;letter-spacing:0.6px">95 939.16</span>
<div style="left:15px;top:1032px;width:1902px;height:3px;background:#fff"></div>
<div style="left:15px;top:1035px;width:1902px;height:1px;background:#000"></div>
<div style="left:18px;top:1032px;width:76px;height:20px;background:#fff;border:1px solid #000;border-top:0"></div>
<span class="t" style="left:27px;top:1038px;letter-spacing:-0.25px">Kereskedés</span>
<span class="t" style="left:102px;top:1038px;color:#404040">Kitettség</span>
<span class="t" style="left:165px;top:1038px;color:#404040">Számlatörténet</span>
<span class="t" style="left:258px;top:1038px;color:#404040">Hírek</span>
<span class="t" style="left:314px;top:1038px;color:#404040">Figyelmeztetések</span>
<span class="t" style="left:417px;top:1038px;color:#404040">Levelesláda</span>
<span class="t" style="left:493px;top:1038px;color:#404040">Piac</span>
<span class="t" style="left:544px;top:1038px;color:#404040">Szignálok</span>
<span class="t" style="left:608px;top:1038px;color:#404040">Kódbázis</span>
<span class="t" style="left:670px;top:1038px;color:#404040">Expert napló</span>
<span class="t" style="left:751px;top:1038px;color:#404040">Napló</span>
<div style="left:156px;top:1040px;width:1px;height:11px;background:#404040"></div>
<div style="left:249px;top:1040px;width:1px;height:11px;background:#404040"></div>
<div style="left:305px;top:1040px;width:1px;height:11px;background:#404040"></div>
<div style="left:409px;top:1040px;width:1px;height:11px;background:#404040"></div>
<div style="left:485px;top:1040px;width:1px;height:11px;background:#404040"></div>
<div style="left:536px;top:1040px;width:1px;height:11px;background:#404040"></div>
<div style="left:599px;top:1040px;width:1px;height:11px;background:#404040"></div>
<div style="left:662px;top:1040px;width:1px;height:11px;background:#404040"></div>
<div style="left:743px;top:1040px;width:1px;height:11px;background:#404040"></div>
<div style="left:790px;top:1040px;width:1px;height:11px;background:#404040"></div>
<span class="t" style="left:286px;top:1040px;color:#FF0000;font-weight:bold;font-size:8px">99</span>
<span class="t" style="left:515px;top:1040px;color:#FF0000;font-weight:bold;font-size:8px">42</span>
<div style="left:0px;top:1057px;width:1920px;height:1px;background:#808080"></div>
<div style="left:0px;top:1058px;width:1920px;height:1px;background:#fff"></div>
<span class="t" style="left:1px;top:1065px;letter-spacing:-0.12px">Segítségért nyomja meg az F1 billentyűt</span>
<div style="left:1199px;top:1062px;width:1px;height:16px;background:#808080"></div>
<div style="left:1200px;top:1062px;width:1px;height:16px;background:#fff"></div>
<div style="left:1308px;top:1062px;width:1px;height:16px;background:#808080"></div>
<div style="left:1309px;top:1062px;width:1px;height:16px;background:#fff"></div>
<div style="left:1409px;top:1062px;width:1px;height:16px;background:#808080"></div>
<div style="left:1410px;top:1062px;width:1px;height:16px;background:#fff"></div>
<div style="left:1481px;top:1062px;width:1px;height:16px;background:#808080"></div>
<div style="left:1482px;top:1062px;width:1px;height:16px;background:#fff"></div>
<div style="left:1552px;top:1062px;width:1px;height:16px;background:#808080"></div>
<div style="left:1553px;top:1062px;width:1px;height:16px;background:#fff"></div>
<div style="left:1621px;top:1062px;width:1px;height:16px;background:#808080"></div>
<div style="left:1622px;top:1062px;width:1px;height:16px;background:#fff"></div>
<div style="left:1692px;top:1062px;width:1px;height:16px;background:#808080"></div>
<div style="left:1693px;top:1062px;width:1px;height:16px;background:#fff"></div>
<div style="left:1758px;top:1062px;width:1px;height:16px;background:#808080"></div>
<div style="left:1759px;top:1062px;width:1px;height:16px;background:#fff"></div>
<span class="t" style="left:1204px;top:1065px;">Default</span>
<svg shape-rendering="crispEdges" style="left:1764px;top:1065px;width:23px;height:12px" viewBox="0 0 23 12"><rect x="0" y="0" width="2" height="9" fill="#5A7A00"/><rect x="0" y="10" width="2" height="2" fill="#003366"/><rect x="3" y="0" width="2" height="8" fill="#5A7A00"/><rect x="3" y="9" width="2" height="3" fill="#003366"/><rect x="6" y="0" width="2" height="7" fill="#5A7A00"/><rect x="6" y="8" width="2" height="4" fill="#003366"/><rect x="9" y="0" width="2" height="6" fill="#5A7A00"/><rect x="9" y="7" width="2" height="5" fill="#003366"/><rect x="12" y="0" width="2" height="4" fill="#5A7A00"/><rect x="12" y="5" width="2" height="7" fill="#003366"/><rect x="15" y="0" width="2" height="3" fill="#5A7A00"/><rect x="15" y="4" width="2" height="8" fill="#003366"/><rect x="18" y="0" width="2" height="2" fill="#5A7A00"/><rect x="18" y="3" width="2" height="9" fill="#003366"/><rect x="21" y="0" width="2" height="1" fill="#5A7A00"/><rect x="21" y="2" width="2" height="10" fill="#003366"/></svg>
<span class="t" style="left:1824px;top:1065px;">302/1 kb</span>
</div>
</body></html>
